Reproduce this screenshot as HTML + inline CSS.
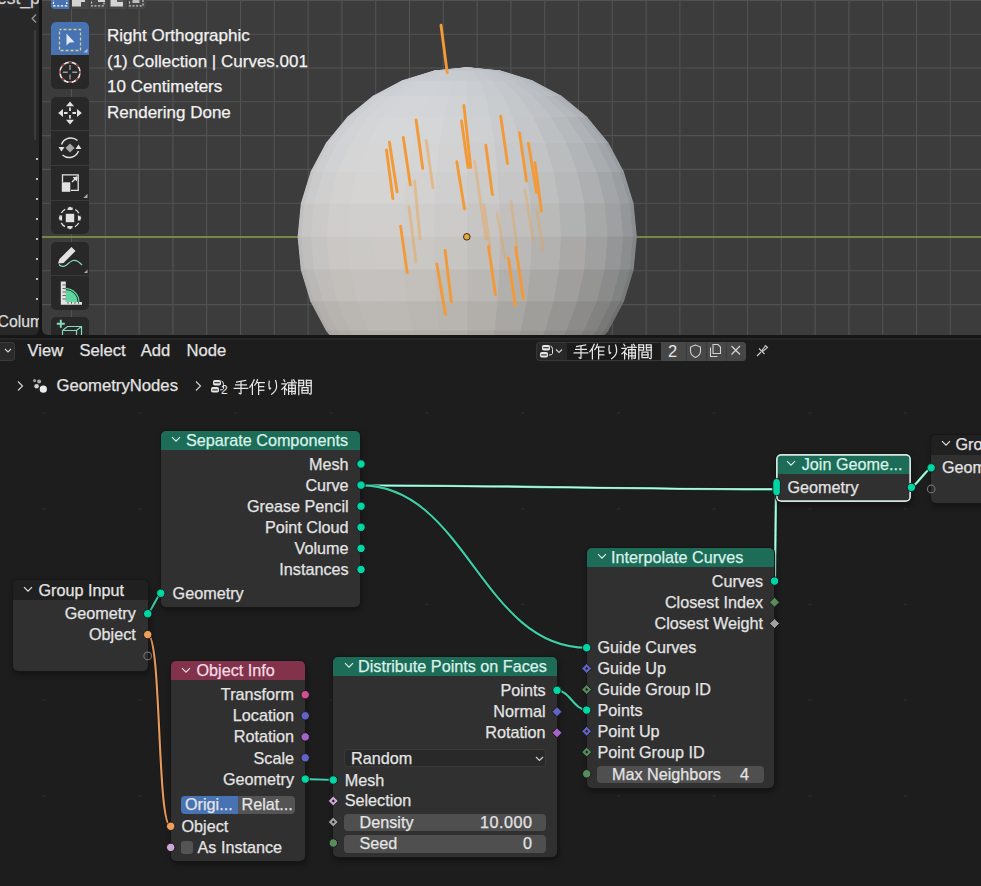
<!DOCTYPE html><html><head><meta charset="utf-8"><style>
html,body{margin:0;padding:0;width:981px;height:886px;overflow:hidden;background:#1d1d1d;position:relative;font-family:"Liberation Sans",sans-serif}
.abs{position:absolute}
.t{position:absolute;white-space:nowrap;line-height:20px;height:20px;-webkit-text-stroke:0.25px currentColor}
.node{position:absolute;background:#303030;border-radius:5px;box-shadow:0 0 0 1px #161616, 1px 3px 6px rgba(0,0,0,.45);overflow:hidden}
.hdr{position:absolute;left:0;top:0;right:0}
.fld{position:absolute;border-radius:4px}
</style></head><body>
<div class="abs" style="left:0;top:0;width:981px;height:338px;background:#161616"></div>
<div class="abs" style="left:0;top:0;width:39px;height:335px;background:#282828;border-radius:0 0 6px 0"></div>
<div class="abs" style="left:34px;top:30px;width:2px;height:110px;background:#3c3c3c;border-radius:1px"></div>
<div class="abs" style="left:36px;top:158px;width:2px;height:2px;background:#bdbdbd"></div>
<div class="abs" style="left:36px;top:178px;width:2px;height:2px;background:#bdbdbd"></div>
<div class="abs" style="left:36px;top:198px;width:2px;height:2px;background:#bdbdbd"></div>
<div class="abs" style="left:36px;top:218px;width:2px;height:2px;background:#bdbdbd"></div>
<div class="abs" style="left:36px;top:238px;width:2px;height:2px;background:#bdbdbd"></div>
<div class="abs" style="left:36px;top:258px;width:2px;height:2px;background:#bdbdbd"></div>
<div class="abs" style="left:36px;top:278px;width:2px;height:2px;background:#bdbdbd"></div>
<div class="abs" style="left:36px;top:298px;width:2px;height:2px;background:#bdbdbd"></div>
<svg class="abs" style="left:30px;top:11px" width="8" height="12"><polyline points="6,3.5 2.2,7.5 6,11.5" fill="none" stroke="#9a9a9a" stroke-width="1.3"/></svg>
<div class="abs" style="left:42px;top:0;width:939px;height:335px;background:#3c3c3c;border-radius:0 0 0 6px;overflow:hidden">
<svg class="abs" style="left:0;top:0" width="939" height="335"><line x1="29.5" y1="0" x2="29.5" y2="335" stroke="#525252" stroke-width="1.1"/><line x1="63.3" y1="0" x2="63.3" y2="335" stroke="#525252" stroke-width="1.1"/><line x1="97.1" y1="0" x2="97.1" y2="335" stroke="#525252" stroke-width="1.1"/><line x1="130.9" y1="0" x2="130.9" y2="335" stroke="#525252" stroke-width="1.1"/><line x1="164.7" y1="0" x2="164.7" y2="335" stroke="#525252" stroke-width="1.1"/><line x1="198.5" y1="0" x2="198.5" y2="335" stroke="#525252" stroke-width="1.1"/><line x1="232.3" y1="0" x2="232.3" y2="335" stroke="#525252" stroke-width="1.1"/><line x1="266.1" y1="0" x2="266.1" y2="335" stroke="#525252" stroke-width="1.1"/><line x1="299.9" y1="0" x2="299.9" y2="335" stroke="#525252" stroke-width="1.1"/><line x1="333.7" y1="0" x2="333.7" y2="335" stroke="#525252" stroke-width="1.1"/><line x1="367.5" y1="0" x2="367.5" y2="335" stroke="#525252" stroke-width="1.1"/><line x1="401.3" y1="0" x2="401.3" y2="335" stroke="#525252" stroke-width="1.1"/><line x1="435.1" y1="0" x2="435.1" y2="335" stroke="#525252" stroke-width="1.1"/><line x1="468.9" y1="0" x2="468.9" y2="335" stroke="#525252" stroke-width="1.1"/><line x1="502.7" y1="0" x2="502.7" y2="335" stroke="#525252" stroke-width="1.1"/><line x1="536.5" y1="0" x2="536.5" y2="335" stroke="#525252" stroke-width="1.1"/><line x1="570.3" y1="0" x2="570.3" y2="335" stroke="#525252" stroke-width="1.1"/><line x1="604.1" y1="0" x2="604.1" y2="335" stroke="#525252" stroke-width="1.1"/><line x1="637.9" y1="0" x2="637.9" y2="335" stroke="#525252" stroke-width="1.1"/><line x1="671.7" y1="0" x2="671.7" y2="335" stroke="#525252" stroke-width="1.1"/><line x1="705.5" y1="0" x2="705.5" y2="335" stroke="#525252" stroke-width="1.1"/><line x1="739.3" y1="0" x2="739.3" y2="335" stroke="#525252" stroke-width="1.1"/><line x1="773.1" y1="0" x2="773.1" y2="335" stroke="#525252" stroke-width="1.1"/><line x1="806.9" y1="0" x2="806.9" y2="335" stroke="#525252" stroke-width="1.1"/><line x1="840.7" y1="0" x2="840.7" y2="335" stroke="#525252" stroke-width="1.1"/><line x1="874.5" y1="0" x2="874.5" y2="335" stroke="#525252" stroke-width="1.1"/><line x1="908.3" y1="0" x2="908.3" y2="335" stroke="#525252" stroke-width="1.1"/><line x1="0" y1="0.4" x2="939" y2="0.4" stroke="#525252" stroke-width="1.1"/><line x1="0" y1="34.2" x2="939" y2="34.2" stroke="#525252" stroke-width="1.1"/><line x1="0" y1="68.0" x2="939" y2="68.0" stroke="#525252" stroke-width="1.1"/><line x1="0" y1="101.8" x2="939" y2="101.8" stroke="#525252" stroke-width="1.1"/><line x1="0" y1="135.6" x2="939" y2="135.6" stroke="#525252" stroke-width="1.1"/><line x1="0" y1="169.4" x2="939" y2="169.4" stroke="#525252" stroke-width="1.1"/><line x1="0" y1="203.2" x2="939" y2="203.2" stroke="#525252" stroke-width="1.1"/><line x1="0" y1="270.8" x2="939" y2="270.8" stroke="#525252" stroke-width="1.1"/><line x1="0" y1="304.6" x2="939" y2="304.6" stroke="#525252" stroke-width="1.1"/><line x1="0" y1="237" x2="939" y2="237" stroke="#86a24a" stroke-width="1.4"/></svg>
</div>
<svg class="abs" style="left:0;top:0" width="981" height="338"><defs><clipPath id="vc"><rect x="42" y="0" width="939" height="335"/></clipPath></defs><g clip-path="url(#vc)"><polygon points="467.2,67.8 467.2,67.8 473.6,71.0 467.2,71.0" fill="rgb(192, 197, 203)" stroke="rgb(192, 197, 203)" stroke-width="1.2" stroke-linejoin="round"/><polygon points="467.2,67.8 467.2,67.8 479.8,71.0 473.6,71.0" fill="rgb(192, 196, 202)" stroke="rgb(192, 196, 202)" stroke-width="1.2" stroke-linejoin="round"/><polygon points="467.2,67.8 467.2,67.8 485.5,71.0 479.8,71.0" fill="rgb(191, 196, 202)" stroke="rgb(191, 196, 202)" stroke-width="1.2" stroke-linejoin="round"/><polygon points="467.2,67.8 467.2,67.8 490.5,71.0 485.5,71.0" fill="rgb(190, 195, 201)" stroke="rgb(190, 195, 201)" stroke-width="1.2" stroke-linejoin="round"/><polygon points="467.2,67.8 467.2,67.8 494.6,71.0 490.5,71.0" fill="rgb(189, 194, 200)" stroke="rgb(189, 194, 200)" stroke-width="1.2" stroke-linejoin="round"/><polygon points="467.2,67.8 467.2,67.8 497.7,71.0 494.6,71.0" fill="rgb(188, 193, 199)" stroke="rgb(188, 193, 199)" stroke-width="1.2" stroke-linejoin="round"/><polygon points="467.2,67.8 467.2,67.8 499.5,71.0 497.7,71.0" fill="rgb(188, 193, 199)" stroke="rgb(188, 193, 199)" stroke-width="1.2" stroke-linejoin="round"/><polygon points="467.2,67.8 467.2,67.8 500.2,71.0 499.5,71.0" fill="rgb(187, 192, 198)" stroke="rgb(187, 192, 198)" stroke-width="1.2" stroke-linejoin="round"/><polygon points="467.2,67.8 467.2,67.8 434.9,71.0 434.2,71.0" fill="rgb(192, 196, 202)" stroke="rgb(192, 196, 202)" stroke-width="1.2" stroke-linejoin="round"/><polygon points="467.2,67.8 467.2,67.8 436.7,71.0 434.9,71.0" fill="rgb(192, 197, 203)" stroke="rgb(192, 197, 203)" stroke-width="1.2" stroke-linejoin="round"/><polygon points="467.2,67.8 467.2,67.8 439.8,71.0 436.7,71.0" fill="rgb(193, 197, 203)" stroke="rgb(193, 197, 203)" stroke-width="1.2" stroke-linejoin="round"/><polygon points="467.2,67.8 467.2,67.8 443.9,71.0 439.8,71.0" fill="rgb(193, 198, 203)" stroke="rgb(193, 198, 203)" stroke-width="1.2" stroke-linejoin="round"/><polygon points="467.2,67.8 467.2,67.8 448.9,71.0 443.9,71.0" fill="rgb(193, 198, 204)" stroke="rgb(193, 198, 204)" stroke-width="1.2" stroke-linejoin="round"/><polygon points="467.2,67.8 467.2,67.8 454.6,71.0 448.9,71.0" fill="rgb(193, 198, 204)" stroke="rgb(193, 198, 204)" stroke-width="1.2" stroke-linejoin="round"/><polygon points="467.2,67.8 467.2,67.8 460.8,71.0 454.6,71.0" fill="rgb(193, 198, 203)" stroke="rgb(193, 198, 203)" stroke-width="1.2" stroke-linejoin="round"/><polygon points="467.2,67.8 467.2,67.8 467.2,71.0 460.8,71.0" fill="rgb(193, 197, 203)" stroke="rgb(193, 197, 203)" stroke-width="1.2" stroke-linejoin="round"/><polygon points="467.2,71.0 473.6,71.0 479.8,80.7 467.2,80.7" fill="rgb(198, 202, 207)" stroke="rgb(198, 202, 207)" stroke-width="1.2" stroke-linejoin="round"/><polygon points="473.6,71.0 479.8,71.0 491.9,80.7 479.8,80.7" fill="rgb(196, 200, 205)" stroke="rgb(196, 200, 205)" stroke-width="1.2" stroke-linejoin="round"/><polygon points="479.8,71.0 485.5,71.0 503.1,80.7 491.9,80.7" fill="rgb(194, 198, 204)" stroke="rgb(194, 198, 204)" stroke-width="1.2" stroke-linejoin="round"/><polygon points="485.5,71.0 490.5,71.0 512.9,80.7 503.1,80.7" fill="rgb(192, 196, 202)" stroke="rgb(192, 196, 202)" stroke-width="1.2" stroke-linejoin="round"/><polygon points="490.5,71.0 494.6,71.0 521.0,80.7 512.9,80.7" fill="rgb(189, 194, 199)" stroke="rgb(189, 194, 199)" stroke-width="1.2" stroke-linejoin="round"/><polygon points="494.6,71.0 497.7,71.0 527.0,80.7 521.0,80.7" fill="rgb(187, 192, 197)" stroke="rgb(187, 192, 197)" stroke-width="1.2" stroke-linejoin="round"/><polygon points="497.7,71.0 499.5,71.0 530.6,80.7 527.0,80.7" fill="rgb(184, 189, 195)" stroke="rgb(184, 189, 195)" stroke-width="1.2" stroke-linejoin="round"/><polygon points="499.5,71.0 500.2,71.0 531.9,80.7 530.6,80.7" fill="rgb(182, 187, 193)" stroke="rgb(182, 187, 193)" stroke-width="1.2" stroke-linejoin="round"/><polygon points="434.2,71.0 434.9,71.0 403.8,80.7 402.5,80.7" fill="rgb(196, 200, 206)" stroke="rgb(196, 200, 206)" stroke-width="1.2" stroke-linejoin="round"/><polygon points="434.9,71.0 436.7,71.0 407.4,80.7 403.8,80.7" fill="rgb(198, 202, 207)" stroke="rgb(198, 202, 207)" stroke-width="1.2" stroke-linejoin="round"/><polygon points="436.7,71.0 439.8,71.0 413.4,80.7 407.4,80.7" fill="rgb(199, 203, 208)" stroke="rgb(199, 203, 208)" stroke-width="1.2" stroke-linejoin="round"/><polygon points="439.8,71.0 443.9,71.0 421.5,80.7 413.4,80.7" fill="rgb(200, 204, 209)" stroke="rgb(200, 204, 209)" stroke-width="1.2" stroke-linejoin="round"/><polygon points="443.9,71.0 448.9,71.0 431.3,80.7 421.5,80.7" fill="rgb(201, 205, 210)" stroke="rgb(201, 205, 210)" stroke-width="1.2" stroke-linejoin="round"/><polygon points="448.9,71.0 454.6,71.0 442.5,80.7 431.3,80.7" fill="rgb(201, 205, 209)" stroke="rgb(201, 205, 209)" stroke-width="1.2" stroke-linejoin="round"/><polygon points="454.6,71.0 460.8,71.0 454.6,80.7 442.5,80.7" fill="rgb(200, 204, 209)" stroke="rgb(200, 204, 209)" stroke-width="1.2" stroke-linejoin="round"/><polygon points="460.8,71.0 467.2,71.0 467.2,80.7 454.6,80.7" fill="rgb(199, 203, 208)" stroke="rgb(199, 203, 208)" stroke-width="1.2" stroke-linejoin="round"/><polygon points="467.2,80.7 479.8,80.7 485.5,96.3 467.2,96.3" fill="rgb(202, 206, 210)" stroke="rgb(202, 206, 210)" stroke-width="1.2" stroke-linejoin="round"/><polygon points="479.8,80.7 491.9,80.7 503.1,96.3 485.5,96.3" fill="rgb(199, 203, 207)" stroke="rgb(199, 203, 207)" stroke-width="1.2" stroke-linejoin="round"/><polygon points="491.9,80.7 503.1,80.7 519.4,96.3 503.1,96.3" fill="rgb(196, 200, 204)" stroke="rgb(196, 200, 204)" stroke-width="1.2" stroke-linejoin="round"/><polygon points="503.1,80.7 512.9,80.7 533.6,96.3 519.4,96.3" fill="rgb(192, 196, 201)" stroke="rgb(192, 196, 201)" stroke-width="1.2" stroke-linejoin="round"/><polygon points="512.9,80.7 521.0,80.7 545.3,96.3 533.6,96.3" fill="rgb(188, 192, 197)" stroke="rgb(188, 192, 197)" stroke-width="1.2" stroke-linejoin="round"/><polygon points="521.0,80.7 527.0,80.7 553.9,96.3 545.3,96.3" fill="rgb(184, 189, 194)" stroke="rgb(184, 189, 194)" stroke-width="1.2" stroke-linejoin="round"/><polygon points="527.0,80.7 530.6,80.7 559.3,96.3 553.9,96.3" fill="rgb(180, 185, 190)" stroke="rgb(180, 185, 190)" stroke-width="1.2" stroke-linejoin="round"/><polygon points="530.6,80.7 531.9,80.7 561.1,96.3 559.3,96.3" fill="rgb(176, 181, 187)" stroke="rgb(176, 181, 187)" stroke-width="1.2" stroke-linejoin="round"/><polygon points="402.5,80.7 403.8,80.7 375.1,96.3 373.3,96.3" fill="rgb(199, 203, 207)" stroke="rgb(199, 203, 207)" stroke-width="1.2" stroke-linejoin="round"/><polygon points="403.8,80.7 407.4,80.7 380.5,96.3 375.1,96.3" fill="rgb(202, 205, 210)" stroke="rgb(202, 205, 210)" stroke-width="1.2" stroke-linejoin="round"/><polygon points="407.4,80.7 413.4,80.7 389.1,96.3 380.5,96.3" fill="rgb(204, 208, 212)" stroke="rgb(204, 208, 212)" stroke-width="1.2" stroke-linejoin="round"/><polygon points="413.4,80.7 421.5,80.7 400.8,96.3 389.1,96.3" fill="rgb(206, 209, 213)" stroke="rgb(206, 209, 213)" stroke-width="1.2" stroke-linejoin="round"/><polygon points="421.5,80.7 431.3,80.7 415.0,96.3 400.8,96.3" fill="rgb(207, 210, 214)" stroke="rgb(207, 210, 214)" stroke-width="1.2" stroke-linejoin="round"/><polygon points="431.3,80.7 442.5,80.7 431.3,96.3 415.0,96.3" fill="rgb(207, 210, 214)" stroke="rgb(207, 210, 214)" stroke-width="1.2" stroke-linejoin="round"/><polygon points="442.5,80.7 454.6,80.7 448.9,96.3 431.3,96.3" fill="rgb(206, 209, 213)" stroke="rgb(206, 209, 213)" stroke-width="1.2" stroke-linejoin="round"/><polygon points="454.6,80.7 467.2,80.7 467.2,96.3 448.9,96.3" fill="rgb(205, 208, 212)" stroke="rgb(205, 208, 212)" stroke-width="1.2" stroke-linejoin="round"/><polygon points="467.2,96.3 485.5,96.3 490.5,117.3 467.2,117.3" fill="rgb(205, 208, 210)" stroke="rgb(205, 208, 210)" stroke-width="1.2" stroke-linejoin="round"/><polygon points="485.5,96.3 503.1,96.3 512.9,117.3 490.5,117.3" fill="rgb(201, 204, 207)" stroke="rgb(201, 204, 207)" stroke-width="1.2" stroke-linejoin="round"/><polygon points="503.1,96.3 519.4,96.3 533.6,117.3 512.9,117.3" fill="rgb(197, 200, 203)" stroke="rgb(197, 200, 203)" stroke-width="1.2" stroke-linejoin="round"/><polygon points="519.4,96.3 533.6,96.3 551.7,117.3 533.6,117.3" fill="rgb(191, 195, 199)" stroke="rgb(191, 195, 199)" stroke-width="1.2" stroke-linejoin="round"/><polygon points="533.6,96.3 545.3,96.3 566.6,117.3 551.7,117.3" fill="rgb(186, 190, 194)" stroke="rgb(186, 190, 194)" stroke-width="1.2" stroke-linejoin="round"/><polygon points="545.3,96.3 553.9,96.3 577.6,117.3 566.6,117.3" fill="rgb(180, 185, 189)" stroke="rgb(180, 185, 189)" stroke-width="1.2" stroke-linejoin="round"/><polygon points="553.9,96.3 559.3,96.3 584.4,117.3 577.6,117.3" fill="rgb(175, 179, 185)" stroke="rgb(175, 179, 185)" stroke-width="1.2" stroke-linejoin="round"/><polygon points="559.3,96.3 561.1,96.3 586.7,117.3 584.4,117.3" fill="rgb(169, 174, 180)" stroke="rgb(169, 174, 180)" stroke-width="1.2" stroke-linejoin="round"/><polygon points="373.3,96.3 375.1,96.3 350.0,117.3 347.7,117.3" fill="rgb(201, 204, 207)" stroke="rgb(201, 204, 207)" stroke-width="1.2" stroke-linejoin="round"/><polygon points="375.1,96.3 380.5,96.3 356.8,117.3 350.0,117.3" fill="rgb(205, 207, 211)" stroke="rgb(205, 207, 211)" stroke-width="1.2" stroke-linejoin="round"/><polygon points="380.5,96.3 389.1,96.3 367.8,117.3 356.8,117.3" fill="rgb(208, 210, 213)" stroke="rgb(208, 210, 213)" stroke-width="1.2" stroke-linejoin="round"/><polygon points="389.1,96.3 400.8,96.3 382.7,117.3 367.8,117.3" fill="rgb(210, 212, 215)" stroke="rgb(210, 212, 215)" stroke-width="1.2" stroke-linejoin="round"/><polygon points="400.8,96.3 415.0,96.3 400.8,117.3 382.7,117.3" fill="rgb(211, 213, 216)" stroke="rgb(211, 213, 216)" stroke-width="1.2" stroke-linejoin="round"/><polygon points="415.0,96.3 431.3,96.3 421.5,117.3 400.8,117.3" fill="rgb(211, 213, 216)" stroke="rgb(211, 213, 216)" stroke-width="1.2" stroke-linejoin="round"/><polygon points="431.3,96.3 448.9,96.3 443.9,117.3 421.5,117.3" fill="rgb(210, 212, 215)" stroke="rgb(210, 212, 215)" stroke-width="1.2" stroke-linejoin="round"/><polygon points="448.9,96.3 467.2,96.3 467.2,117.3 443.9,117.3" fill="rgb(208, 210, 213)" stroke="rgb(208, 210, 213)" stroke-width="1.2" stroke-linejoin="round"/><polygon points="467.2,117.3 490.5,117.3 494.6,142.9 467.2,142.9" fill="rgb(206, 208, 210)" stroke="rgb(206, 208, 210)" stroke-width="1.2" stroke-linejoin="round"/><polygon points="490.5,117.3 512.9,117.3 521.0,142.9 494.6,142.9" fill="rgb(201, 203, 205)" stroke="rgb(201, 203, 205)" stroke-width="1.2" stroke-linejoin="round"/><polygon points="512.9,117.3 533.6,117.3 545.3,142.9 521.0,142.9" fill="rgb(196, 198, 201)" stroke="rgb(196, 198, 201)" stroke-width="1.2" stroke-linejoin="round"/><polygon points="533.6,117.3 551.7,117.3 566.6,142.9 545.3,142.9" fill="rgb(189, 192, 195)" stroke="rgb(189, 192, 195)" stroke-width="1.2" stroke-linejoin="round"/><polygon points="551.7,117.3 566.6,117.3 584.0,142.9 566.6,142.9" fill="rgb(183, 186, 189)" stroke="rgb(183, 186, 189)" stroke-width="1.2" stroke-linejoin="round"/><polygon points="566.6,117.3 577.6,117.3 597.0,142.9 584.0,142.9" fill="rgb(175, 179, 183)" stroke="rgb(175, 179, 183)" stroke-width="1.2" stroke-linejoin="round"/><polygon points="577.6,117.3 584.4,117.3 605.0,142.9 597.0,142.9" fill="rgb(168, 172, 177)" stroke="rgb(168, 172, 177)" stroke-width="1.2" stroke-linejoin="round"/><polygon points="584.4,117.3 586.7,117.3 607.7,142.9 605.0,142.9" fill="rgb(161, 166, 171)" stroke="rgb(161, 166, 171)" stroke-width="1.2" stroke-linejoin="round"/><polygon points="347.7,117.3 350.0,117.3 329.4,142.9 326.7,142.9" fill="rgb(201, 203, 206)" stroke="rgb(201, 203, 206)" stroke-width="1.2" stroke-linejoin="round"/><polygon points="350.0,117.3 356.8,117.3 337.4,142.9 329.4,142.9" fill="rgb(206, 207, 210)" stroke="rgb(206, 207, 210)" stroke-width="1.2" stroke-linejoin="round"/><polygon points="356.8,117.3 367.8,117.3 350.4,142.9 337.4,142.9" fill="rgb(210, 211, 213)" stroke="rgb(210, 211, 213)" stroke-width="1.2" stroke-linejoin="round"/><polygon points="367.8,117.3 382.7,117.3 367.8,142.9 350.4,142.9" fill="rgb(212, 213, 215)" stroke="rgb(212, 213, 215)" stroke-width="1.2" stroke-linejoin="round"/><polygon points="382.7,117.3 400.8,117.3 389.1,142.9 367.8,142.9" fill="rgb(214, 215, 216)" stroke="rgb(214, 215, 216)" stroke-width="1.2" stroke-linejoin="round"/><polygon points="400.8,117.3 421.5,117.3 413.4,142.9 389.1,142.9" fill="rgb(214, 215, 216)" stroke="rgb(214, 215, 216)" stroke-width="1.2" stroke-linejoin="round"/><polygon points="421.5,117.3 443.9,117.3 439.8,142.9 413.4,142.9" fill="rgb(213, 214, 215)" stroke="rgb(213, 214, 215)" stroke-width="1.2" stroke-linejoin="round"/><polygon points="443.9,117.3 467.2,117.3 467.2,142.9 439.8,142.9" fill="rgb(210, 211, 213)" stroke="rgb(210, 211, 213)" stroke-width="1.2" stroke-linejoin="round"/><polygon points="467.2,142.9 494.6,142.9 497.7,172.1 467.2,172.1" fill="rgb(206, 206, 207)" stroke="rgb(206, 206, 207)" stroke-width="1.2" stroke-linejoin="round"/><polygon points="494.6,142.9 521.0,142.9 527.0,172.1 497.7,172.1" fill="rgb(200, 201, 202)" stroke="rgb(200, 201, 202)" stroke-width="1.2" stroke-linejoin="round"/><polygon points="521.0,142.9 545.3,142.9 553.9,172.1 527.0,172.1" fill="rgb(194, 195, 197)" stroke="rgb(194, 195, 197)" stroke-width="1.2" stroke-linejoin="round"/><polygon points="545.3,142.9 566.6,142.9 577.6,172.1 553.9,172.1" fill="rgb(186, 189, 190)" stroke="rgb(186, 189, 190)" stroke-width="1.2" stroke-linejoin="round"/><polygon points="566.6,142.9 584.0,142.9 597.0,172.1 577.6,172.1" fill="rgb(178, 181, 183)" stroke="rgb(178, 181, 183)" stroke-width="1.2" stroke-linejoin="round"/><polygon points="584.0,142.9 597.0,142.9 611.5,172.1 597.0,172.1" fill="rgb(169, 173, 176)" stroke="rgb(169, 173, 176)" stroke-width="1.2" stroke-linejoin="round"/><polygon points="597.0,142.9 605.0,142.9 620.3,172.1 611.5,172.1" fill="rgb(161, 165, 169)" stroke="rgb(161, 165, 169)" stroke-width="1.2" stroke-linejoin="round"/><polygon points="605.0,142.9 607.7,142.9 623.3,172.1 620.3,172.1" fill="rgb(153, 158, 162)" stroke="rgb(153, 158, 162)" stroke-width="1.2" stroke-linejoin="round"/><polygon points="326.7,142.9 329.4,142.9 314.1,172.1 311.1,172.1" fill="rgb(199, 201, 203)" stroke="rgb(199, 201, 203)" stroke-width="1.2" stroke-linejoin="round"/><polygon points="329.4,142.9 337.4,142.9 322.9,172.1 314.1,172.1" fill="rgb(205, 206, 207)" stroke="rgb(205, 206, 207)" stroke-width="1.2" stroke-linejoin="round"/><polygon points="337.4,142.9 350.4,142.9 337.4,172.1 322.9,172.1" fill="rgb(209, 210, 211)" stroke="rgb(209, 210, 211)" stroke-width="1.2" stroke-linejoin="round"/><polygon points="350.4,142.9 367.8,142.9 356.8,172.1 337.4,172.1" fill="rgb(213, 213, 213)" stroke="rgb(213, 213, 213)" stroke-width="1.2" stroke-linejoin="round"/><polygon points="367.8,142.9 389.1,142.9 380.5,172.1 356.8,172.1" fill="rgb(214, 214, 215)" stroke="rgb(214, 214, 215)" stroke-width="1.2" stroke-linejoin="round"/><polygon points="389.1,142.9 413.4,142.9 407.4,172.1 380.5,172.1" fill="rgb(214, 214, 215)" stroke="rgb(214, 214, 215)" stroke-width="1.2" stroke-linejoin="round"/><polygon points="413.4,142.9 439.8,142.9 436.7,172.1 407.4,172.1" fill="rgb(213, 213, 213)" stroke="rgb(213, 213, 213)" stroke-width="1.2" stroke-linejoin="round"/><polygon points="439.8,142.9 467.2,142.9 467.2,172.1 436.7,172.1" fill="rgb(210, 210, 211)" stroke="rgb(210, 210, 211)" stroke-width="1.2" stroke-linejoin="round"/><polygon points="467.2,172.1 497.7,172.1 499.5,203.8 467.2,203.8" fill="rgb(203, 203, 202)" stroke="rgb(203, 203, 202)" stroke-width="1.2" stroke-linejoin="round"/><polygon points="497.7,172.1 527.0,172.1 530.6,203.8 499.5,203.8" fill="rgb(197, 198, 197)" stroke="rgb(197, 198, 197)" stroke-width="1.2" stroke-linejoin="round"/><polygon points="527.0,172.1 553.9,172.1 559.3,203.8 530.6,203.8" fill="rgb(190, 191, 191)" stroke="rgb(190, 191, 191)" stroke-width="1.2" stroke-linejoin="round"/><polygon points="553.9,172.1 577.6,172.1 584.4,203.8 559.3,203.8" fill="rgb(182, 184, 185)" stroke="rgb(182, 184, 185)" stroke-width="1.2" stroke-linejoin="round"/><polygon points="577.6,172.1 597.0,172.1 605.0,203.8 584.4,203.8" fill="rgb(173, 175, 176)" stroke="rgb(173, 175, 176)" stroke-width="1.2" stroke-linejoin="round"/><polygon points="597.0,172.1 611.5,172.1 620.3,203.8 605.0,203.8" fill="rgb(163, 166, 168)" stroke="rgb(163, 166, 168)" stroke-width="1.2" stroke-linejoin="round"/><polygon points="611.5,172.1 620.3,172.1 629.8,203.8 620.3,203.8" fill="rgb(154, 158, 161)" stroke="rgb(154, 158, 161)" stroke-width="1.2" stroke-linejoin="round"/><polygon points="620.3,172.1 623.3,172.1 633.0,203.8 629.8,203.8" fill="rgb(146, 150, 154)" stroke="rgb(146, 150, 154)" stroke-width="1.2" stroke-linejoin="round"/><polygon points="311.1,172.1 314.1,172.1 304.6,203.8 301.4,203.8" fill="rgb(196, 197, 198)" stroke="rgb(196, 197, 198)" stroke-width="1.2" stroke-linejoin="round"/><polygon points="314.1,172.1 322.9,172.1 314.1,203.8 304.6,203.8" fill="rgb(203, 203, 203)" stroke="rgb(203, 203, 203)" stroke-width="1.2" stroke-linejoin="round"/><polygon points="322.9,172.1 337.4,172.1 329.4,203.8 314.1,203.8" fill="rgb(207, 207, 207)" stroke="rgb(207, 207, 207)" stroke-width="1.2" stroke-linejoin="round"/><polygon points="337.4,172.1 356.8,172.1 350.0,203.8 329.4,203.8" fill="rgb(211, 210, 209)" stroke="rgb(211, 210, 209)" stroke-width="1.2" stroke-linejoin="round"/><polygon points="356.8,172.1 380.5,172.1 375.1,203.8 350.0,203.8" fill="rgb(213, 212, 211)" stroke="rgb(213, 212, 211)" stroke-width="1.2" stroke-linejoin="round"/><polygon points="380.5,172.1 407.4,172.1 403.8,203.8 375.1,203.8" fill="rgb(213, 212, 211)" stroke="rgb(213, 212, 211)" stroke-width="1.2" stroke-linejoin="round"/><polygon points="407.4,172.1 436.7,172.1 434.9,203.8 403.8,203.8" fill="rgb(211, 210, 209)" stroke="rgb(211, 210, 209)" stroke-width="1.2" stroke-linejoin="round"/><polygon points="436.7,172.1 467.2,172.1 467.2,203.8 434.9,203.8" fill="rgb(208, 207, 207)" stroke="rgb(208, 207, 207)" stroke-width="1.2" stroke-linejoin="round"/><polygon points="467.2,203.8 499.5,203.8 500.2,236.8 467.2,236.8" fill="rgb(199, 198, 197)" stroke="rgb(199, 198, 197)" stroke-width="1.2" stroke-linejoin="round"/><polygon points="499.5,203.8 530.6,203.8 531.9,236.8 500.2,236.8" fill="rgb(193, 192, 191)" stroke="rgb(193, 192, 191)" stroke-width="1.2" stroke-linejoin="round"/><polygon points="530.6,203.8 559.3,203.8 561.1,236.8 531.9,236.8" fill="rgb(186, 186, 185)" stroke="rgb(186, 186, 185)" stroke-width="1.2" stroke-linejoin="round"/><polygon points="559.3,203.8 584.4,203.8 586.7,236.8 561.1,236.8" fill="rgb(177, 178, 178)" stroke="rgb(177, 178, 178)" stroke-width="1.2" stroke-linejoin="round"/><polygon points="584.4,203.8 605.0,203.8 607.7,236.8 586.7,236.8" fill="rgb(167, 169, 169)" stroke="rgb(167, 169, 169)" stroke-width="1.2" stroke-linejoin="round"/><polygon points="605.0,203.8 620.3,203.8 623.3,236.8 607.7,236.8" fill="rgb(158, 160, 161)" stroke="rgb(158, 160, 161)" stroke-width="1.2" stroke-linejoin="round"/><polygon points="620.3,203.8 629.8,203.8 633.0,236.8 623.3,236.8" fill="rgb(148, 151, 153)" stroke="rgb(148, 151, 153)" stroke-width="1.2" stroke-linejoin="round"/><polygon points="629.8,203.8 633.0,203.8 636.2,236.8 633.0,236.8" fill="rgb(140, 143, 146)" stroke="rgb(140, 143, 146)" stroke-width="1.2" stroke-linejoin="round"/><polygon points="301.4,203.8 304.6,203.8 301.4,236.8 298.2,236.8" fill="rgb(192, 192, 192)" stroke="rgb(192, 192, 192)" stroke-width="1.2" stroke-linejoin="round"/><polygon points="304.6,203.8 314.1,203.8 311.1,236.8 301.4,236.8" fill="rgb(199, 198, 197)" stroke="rgb(199, 198, 197)" stroke-width="1.2" stroke-linejoin="round"/><polygon points="314.1,203.8 329.4,203.8 326.7,236.8 311.1,236.8" fill="rgb(204, 202, 201)" stroke="rgb(204, 202, 201)" stroke-width="1.2" stroke-linejoin="round"/><polygon points="329.4,203.8 350.0,203.8 347.7,236.8 326.7,236.8" fill="rgb(207, 206, 204)" stroke="rgb(207, 206, 204)" stroke-width="1.2" stroke-linejoin="round"/><polygon points="350.0,203.8 375.1,203.8 373.3,236.8 347.7,236.8" fill="rgb(209, 207, 205)" stroke="rgb(209, 207, 205)" stroke-width="1.2" stroke-linejoin="round"/><polygon points="375.1,203.8 403.8,203.8 402.5,236.8 373.3,236.8" fill="rgb(209, 207, 205)" stroke="rgb(209, 207, 205)" stroke-width="1.2" stroke-linejoin="round"/><polygon points="403.8,203.8 434.9,203.8 434.2,236.8 402.5,236.8" fill="rgb(207, 206, 204)" stroke="rgb(207, 206, 204)" stroke-width="1.2" stroke-linejoin="round"/><polygon points="434.9,203.8 467.2,203.8 467.2,236.8 434.2,236.8" fill="rgb(204, 203, 201)" stroke="rgb(204, 203, 201)" stroke-width="1.2" stroke-linejoin="round"/><polygon points="467.2,236.8 500.2,236.8 499.5,269.8 467.2,269.8" fill="rgb(193, 192, 189)" stroke="rgb(193, 192, 189)" stroke-width="1.2" stroke-linejoin="round"/><polygon points="500.2,236.8 531.9,236.8 530.6,269.8 499.5,269.8" fill="rgb(187, 185, 183)" stroke="rgb(187, 185, 183)" stroke-width="1.2" stroke-linejoin="round"/><polygon points="531.9,236.8 561.1,236.8 559.3,269.8 530.6,269.8" fill="rgb(179, 178, 176)" stroke="rgb(179, 178, 176)" stroke-width="1.2" stroke-linejoin="round"/><polygon points="561.1,236.8 586.7,236.8 584.4,269.8 559.3,269.8" fill="rgb(170, 169, 168)" stroke="rgb(170, 169, 168)" stroke-width="1.2" stroke-linejoin="round"/><polygon points="586.7,236.8 607.7,236.8 605.0,269.8 584.4,269.8" fill="rgb(159, 160, 159)" stroke="rgb(159, 160, 159)" stroke-width="1.2" stroke-linejoin="round"/><polygon points="607.7,236.8 623.3,236.8 620.3,269.8 605.0,269.8" fill="rgb(149, 150, 151)" stroke="rgb(149, 150, 151)" stroke-width="1.2" stroke-linejoin="round"/><polygon points="623.3,236.8 633.0,236.8 629.8,269.8 620.3,269.8" fill="rgb(139, 141, 142)" stroke="rgb(139, 141, 142)" stroke-width="1.2" stroke-linejoin="round"/><polygon points="633.0,236.8 636.2,236.8 633.0,269.8 629.8,269.8" fill="rgb(131, 133, 135)" stroke="rgb(131, 133, 135)" stroke-width="1.2" stroke-linejoin="round"/><polygon points="298.2,236.8 301.4,236.8 304.6,269.8 301.4,269.8" fill="rgb(187, 186, 185)" stroke="rgb(187, 186, 185)" stroke-width="1.2" stroke-linejoin="round"/><polygon points="301.4,236.8 311.1,236.8 314.1,269.8 304.6,269.8" fill="rgb(193, 191, 190)" stroke="rgb(193, 191, 190)" stroke-width="1.2" stroke-linejoin="round"/><polygon points="311.1,236.8 326.7,236.8 329.4,269.8 314.1,269.8" fill="rgb(198, 196, 194)" stroke="rgb(198, 196, 194)" stroke-width="1.2" stroke-linejoin="round"/><polygon points="326.7,236.8 347.7,236.8 350.0,269.8 329.4,269.8" fill="rgb(202, 199, 197)" stroke="rgb(202, 199, 197)" stroke-width="1.2" stroke-linejoin="round"/><polygon points="347.7,236.8 373.3,236.8 375.1,269.8 350.0,269.8" fill="rgb(203, 201, 198)" stroke="rgb(203, 201, 198)" stroke-width="1.2" stroke-linejoin="round"/><polygon points="373.3,236.8 402.5,236.8 403.8,269.8 375.1,269.8" fill="rgb(204, 201, 198)" stroke="rgb(204, 201, 198)" stroke-width="1.2" stroke-linejoin="round"/><polygon points="402.5,236.8 434.2,236.8 434.9,269.8 403.8,269.8" fill="rgb(202, 200, 197)" stroke="rgb(202, 200, 197)" stroke-width="1.2" stroke-linejoin="round"/><polygon points="434.2,236.8 467.2,236.8 467.2,269.8 434.9,269.8" fill="rgb(199, 197, 194)" stroke="rgb(199, 197, 194)" stroke-width="1.2" stroke-linejoin="round"/><polygon points="467.2,269.8 499.5,269.8 497.7,301.5 467.2,301.5" fill="rgb(186, 184, 180)" stroke="rgb(186, 184, 180)" stroke-width="1.2" stroke-linejoin="round"/><polygon points="499.5,269.8 530.6,269.8 527.0,301.5 497.7,301.5" fill="rgb(178, 176, 173)" stroke="rgb(178, 176, 173)" stroke-width="1.2" stroke-linejoin="round"/><polygon points="530.6,269.8 559.3,269.8 553.9,301.5 527.0,301.5" fill="rgb(169, 168, 165)" stroke="rgb(169, 168, 165)" stroke-width="1.2" stroke-linejoin="round"/><polygon points="559.3,269.8 584.4,269.8 577.6,301.5 553.9,301.5" fill="rgb(160, 159, 157)" stroke="rgb(160, 159, 157)" stroke-width="1.2" stroke-linejoin="round"/><polygon points="584.4,269.8 605.0,269.8 597.0,301.5 577.6,301.5" fill="rgb(149, 149, 147)" stroke="rgb(149, 149, 147)" stroke-width="1.2" stroke-linejoin="round"/><polygon points="605.0,269.8 620.3,269.8 611.5,301.5 597.0,301.5" fill="rgb(138, 139, 138)" stroke="rgb(138, 139, 138)" stroke-width="1.2" stroke-linejoin="round"/><polygon points="620.3,269.8 629.8,269.8 620.3,301.5 611.5,301.5" fill="rgb(129, 130, 130)" stroke="rgb(129, 130, 130)" stroke-width="1.2" stroke-linejoin="round"/><polygon points="629.8,269.8 633.0,269.8 623.3,301.5 620.3,301.5" fill="rgb(120, 122, 123)" stroke="rgb(120, 122, 123)" stroke-width="1.2" stroke-linejoin="round"/><polygon points="301.4,269.8 304.6,269.8 314.1,301.5 311.1,301.5" fill="rgb(180, 179, 177)" stroke="rgb(180, 179, 177)" stroke-width="1.2" stroke-linejoin="round"/><polygon points="304.6,269.8 314.1,269.8 322.9,301.5 314.1,301.5" fill="rgb(186, 184, 182)" stroke="rgb(186, 184, 182)" stroke-width="1.2" stroke-linejoin="round"/><polygon points="314.1,269.8 329.4,269.8 337.4,301.5 322.9,301.5" fill="rgb(191, 189, 186)" stroke="rgb(191, 189, 186)" stroke-width="1.2" stroke-linejoin="round"/><polygon points="329.4,269.8 350.0,269.8 356.8,301.5 337.4,301.5" fill="rgb(195, 192, 188)" stroke="rgb(195, 192, 188)" stroke-width="1.2" stroke-linejoin="round"/><polygon points="350.0,269.8 375.1,269.8 380.5,301.5 356.8,301.5" fill="rgb(196, 193, 190)" stroke="rgb(196, 193, 190)" stroke-width="1.2" stroke-linejoin="round"/><polygon points="375.1,269.8 403.8,269.8 407.4,301.5 380.5,301.5" fill="rgb(196, 193, 190)" stroke="rgb(196, 193, 190)" stroke-width="1.2" stroke-linejoin="round"/><polygon points="403.8,269.8 434.9,269.8 436.7,301.5 407.4,301.5" fill="rgb(195, 192, 188)" stroke="rgb(195, 192, 188)" stroke-width="1.2" stroke-linejoin="round"/><polygon points="434.9,269.8 467.2,269.8 467.2,301.5 436.7,301.5" fill="rgb(192, 189, 185)" stroke="rgb(192, 189, 185)" stroke-width="1.2" stroke-linejoin="round"/><polygon points="467.2,301.5 497.7,301.5 494.6,330.7 467.2,330.7" fill="rgb(178, 175, 171)" stroke="rgb(178, 175, 171)" stroke-width="1.2" stroke-linejoin="round"/><polygon points="497.7,301.5 527.0,301.5 521.0,330.7 494.6,330.7" fill="rgb(169, 167, 163)" stroke="rgb(169, 167, 163)" stroke-width="1.2" stroke-linejoin="round"/><polygon points="527.0,301.5 553.9,301.5 545.3,330.7 521.0,330.7" fill="rgb(160, 158, 155)" stroke="rgb(160, 158, 155)" stroke-width="1.2" stroke-linejoin="round"/><polygon points="553.9,301.5 577.6,301.5 566.6,330.7 545.3,330.7" fill="rgb(150, 149, 146)" stroke="rgb(150, 149, 146)" stroke-width="1.2" stroke-linejoin="round"/><polygon points="577.6,301.5 597.0,301.5 584.0,330.7 566.6,330.7" fill="rgb(140, 139, 137)" stroke="rgb(140, 139, 137)" stroke-width="1.2" stroke-linejoin="round"/><polygon points="597.0,301.5 611.5,301.5 597.0,330.7 584.0,330.7" fill="rgb(130, 130, 128)" stroke="rgb(130, 130, 128)" stroke-width="1.2" stroke-linejoin="round"/><polygon points="611.5,301.5 620.3,301.5 605.0,330.7 597.0,330.7" fill="rgb(120, 121, 120)" stroke="rgb(120, 121, 120)" stroke-width="1.2" stroke-linejoin="round"/><polygon points="620.3,301.5 623.3,301.5 607.7,330.7 605.0,330.7" fill="rgb(112, 113, 113)" stroke="rgb(112, 113, 113)" stroke-width="1.2" stroke-linejoin="round"/><polygon points="311.1,301.5 314.1,301.5 329.4,330.7 326.7,330.7" fill="rgb(173, 171, 168)" stroke="rgb(173, 171, 168)" stroke-width="1.2" stroke-linejoin="round"/><polygon points="314.1,301.5 322.9,301.5 337.4,330.7 329.4,330.7" fill="rgb(179, 176, 173)" stroke="rgb(179, 176, 173)" stroke-width="1.2" stroke-linejoin="round"/><polygon points="322.9,301.5 337.4,301.5 350.4,330.7 337.4,330.7" fill="rgb(183, 180, 176)" stroke="rgb(183, 180, 176)" stroke-width="1.2" stroke-linejoin="round"/><polygon points="337.4,301.5 356.8,301.5 367.8,330.7 350.4,330.7" fill="rgb(186, 183, 179)" stroke="rgb(186, 183, 179)" stroke-width="1.2" stroke-linejoin="round"/><polygon points="356.8,301.5 380.5,301.5 389.1,330.7 367.8,330.7" fill="rgb(188, 184, 180)" stroke="rgb(188, 184, 180)" stroke-width="1.2" stroke-linejoin="round"/><polygon points="380.5,301.5 407.4,301.5 413.4,330.7 389.1,330.7" fill="rgb(188, 184, 180)" stroke="rgb(188, 184, 180)" stroke-width="1.2" stroke-linejoin="round"/><polygon points="407.4,301.5 436.7,301.5 439.8,330.7 413.4,330.7" fill="rgb(186, 183, 179)" stroke="rgb(186, 183, 179)" stroke-width="1.2" stroke-linejoin="round"/><polygon points="436.7,301.5 467.2,301.5 467.2,330.7 439.8,330.7" fill="rgb(184, 180, 176)" stroke="rgb(184, 180, 176)" stroke-width="1.2" stroke-linejoin="round"/><polygon points="467.2,330.7 494.6,330.7 490.5,356.3 467.2,356.3" fill="rgb(169, 166, 161)" stroke="rgb(169, 166, 161)" stroke-width="1.2" stroke-linejoin="round"/><polygon points="494.6,330.7 521.0,330.7 512.9,356.3 490.5,356.3" fill="rgb(161, 158, 154)" stroke="rgb(161, 158, 154)" stroke-width="1.2" stroke-linejoin="round"/><polygon points="521.0,330.7 545.3,330.7 533.6,356.3 512.9,356.3" fill="rgb(152, 150, 146)" stroke="rgb(152, 150, 146)" stroke-width="1.2" stroke-linejoin="round"/><polygon points="545.3,330.7 566.6,330.7 551.7,356.3 533.6,356.3" fill="rgb(143, 141, 138)" stroke="rgb(143, 141, 138)" stroke-width="1.2" stroke-linejoin="round"/><polygon points="566.6,330.7 584.0,330.7 566.6,356.3 551.7,356.3" fill="rgb(133, 132, 129)" stroke="rgb(133, 132, 129)" stroke-width="1.2" stroke-linejoin="round"/><polygon points="584.0,330.7 597.0,330.7 577.6,356.3 566.6,356.3" fill="rgb(124, 123, 121)" stroke="rgb(124, 123, 121)" stroke-width="1.2" stroke-linejoin="round"/><polygon points="597.0,330.7 605.0,330.7 584.4,356.3 577.6,356.3" fill="rgb(115, 115, 114)" stroke="rgb(115, 115, 114)" stroke-width="1.2" stroke-linejoin="round"/><polygon points="605.0,330.7 607.7,330.7 586.7,356.3 584.4,356.3" fill="rgb(108, 109, 107)" stroke="rgb(108, 109, 107)" stroke-width="1.2" stroke-linejoin="round"/><polygon points="326.7,330.7 329.4,330.7 350.0,356.3 347.7,356.3" fill="rgb(165, 163, 159)" stroke="rgb(165, 163, 159)" stroke-width="1.2" stroke-linejoin="round"/><polygon points="329.4,330.7 337.4,330.7 356.8,356.3 350.0,356.3" fill="rgb(170, 167, 164)" stroke="rgb(170, 167, 164)" stroke-width="1.2" stroke-linejoin="round"/><polygon points="337.4,330.7 350.4,330.7 367.8,356.3 356.8,356.3" fill="rgb(174, 171, 167)" stroke="rgb(174, 171, 167)" stroke-width="1.2" stroke-linejoin="round"/><polygon points="350.4,330.7 367.8,330.7 382.7,356.3 367.8,356.3" fill="rgb(177, 173, 169)" stroke="rgb(177, 173, 169)" stroke-width="1.2" stroke-linejoin="round"/><polygon points="367.8,330.7 389.1,330.7 400.8,356.3 382.7,356.3" fill="rgb(178, 175, 170)" stroke="rgb(178, 175, 170)" stroke-width="1.2" stroke-linejoin="round"/><polygon points="389.1,330.7 413.4,330.7 421.5,356.3 400.8,356.3" fill="rgb(178, 175, 170)" stroke="rgb(178, 175, 170)" stroke-width="1.2" stroke-linejoin="round"/><polygon points="413.4,330.7 439.8,330.7 443.9,356.3 421.5,356.3" fill="rgb(177, 174, 169)" stroke="rgb(177, 174, 169)" stroke-width="1.2" stroke-linejoin="round"/><polygon points="439.8,330.7 467.2,330.7 467.2,356.3 443.9,356.3" fill="rgb(175, 171, 166)" stroke="rgb(175, 171, 166)" stroke-width="1.2" stroke-linejoin="round"/><polygon points="467.2,356.3 490.5,356.3 485.5,377.3 467.2,377.3" fill="rgb(160, 157, 152)" stroke="rgb(160, 157, 152)" stroke-width="1.2" stroke-linejoin="round"/><polygon points="490.5,356.3 512.9,356.3 503.1,377.3 485.5,377.3" fill="rgb(153, 150, 146)" stroke="rgb(153, 150, 146)" stroke-width="1.2" stroke-linejoin="round"/><polygon points="512.9,356.3 533.6,356.3 519.4,377.3 503.1,377.3" fill="rgb(145, 143, 138)" stroke="rgb(145, 143, 138)" stroke-width="1.2" stroke-linejoin="round"/><polygon points="533.6,356.3 551.7,356.3 533.6,377.3 519.4,377.3" fill="rgb(137, 135, 131)" stroke="rgb(137, 135, 131)" stroke-width="1.2" stroke-linejoin="round"/><polygon points="551.7,356.3 566.6,356.3 545.3,377.3 533.6,377.3" fill="rgb(129, 127, 124)" stroke="rgb(129, 127, 124)" stroke-width="1.2" stroke-linejoin="round"/><polygon points="566.6,356.3 577.6,356.3 553.9,377.3 545.3,377.3" fill="rgb(121, 120, 117)" stroke="rgb(121, 120, 117)" stroke-width="1.2" stroke-linejoin="round"/><polygon points="577.6,356.3 584.4,356.3 559.3,377.3 553.9,377.3" fill="rgb(114, 114, 111)" stroke="rgb(114, 114, 111)" stroke-width="1.2" stroke-linejoin="round"/><polygon points="584.4,356.3 586.7,356.3 561.1,377.3 559.3,377.3" fill="rgb(108, 108, 106)" stroke="rgb(108, 108, 106)" stroke-width="1.2" stroke-linejoin="round"/><polygon points="347.7,356.3 350.0,356.3 375.1,377.3 373.3,377.3" fill="rgb(157, 155, 151)" stroke="rgb(157, 155, 151)" stroke-width="1.2" stroke-linejoin="round"/><polygon points="350.0,356.3 356.8,356.3 380.5,377.3 375.1,377.3" fill="rgb(161, 158, 154)" stroke="rgb(161, 158, 154)" stroke-width="1.2" stroke-linejoin="round"/><polygon points="356.8,356.3 367.8,356.3 389.1,377.3 380.5,377.3" fill="rgb(165, 161, 157)" stroke="rgb(165, 161, 157)" stroke-width="1.2" stroke-linejoin="round"/><polygon points="367.8,356.3 382.7,356.3 400.8,377.3 389.1,377.3" fill="rgb(167, 163, 159)" stroke="rgb(167, 163, 159)" stroke-width="1.2" stroke-linejoin="round"/><polygon points="382.7,356.3 400.8,356.3 415.0,377.3 400.8,377.3" fill="rgb(168, 165, 160)" stroke="rgb(168, 165, 160)" stroke-width="1.2" stroke-linejoin="round"/><polygon points="400.8,356.3 421.5,356.3 431.3,377.3 415.0,377.3" fill="rgb(168, 165, 160)" stroke="rgb(168, 165, 160)" stroke-width="1.2" stroke-linejoin="round"/><polygon points="421.5,356.3 443.9,356.3 448.9,377.3 431.3,377.3" fill="rgb(167, 164, 159)" stroke="rgb(167, 164, 159)" stroke-width="1.2" stroke-linejoin="round"/><polygon points="443.9,356.3 467.2,356.3 467.2,377.3 448.9,377.3" fill="rgb(165, 162, 157)" stroke="rgb(165, 162, 157)" stroke-width="1.2" stroke-linejoin="round"/><polygon points="467.2,377.3 485.5,377.3 479.8,392.9 467.2,392.9" fill="rgb(152, 149, 144)" stroke="rgb(152, 149, 144)" stroke-width="1.2" stroke-linejoin="round"/><polygon points="485.5,377.3 503.1,377.3 491.9,392.9 479.8,392.9" fill="rgb(146, 143, 138)" stroke="rgb(146, 143, 138)" stroke-width="1.2" stroke-linejoin="round"/><polygon points="503.1,377.3 519.4,377.3 503.1,392.9 491.9,392.9" fill="rgb(140, 137, 133)" stroke="rgb(140, 137, 133)" stroke-width="1.2" stroke-linejoin="round"/><polygon points="519.4,377.3 533.6,377.3 512.9,392.9 503.1,392.9" fill="rgb(133, 131, 127)" stroke="rgb(133, 131, 127)" stroke-width="1.2" stroke-linejoin="round"/><polygon points="533.6,377.3 545.3,377.3 521.0,392.9 512.9,392.9" fill="rgb(127, 125, 122)" stroke="rgb(127, 125, 122)" stroke-width="1.2" stroke-linejoin="round"/><polygon points="545.3,377.3 553.9,377.3 527.0,392.9 521.0,392.9" fill="rgb(121, 120, 116)" stroke="rgb(121, 120, 116)" stroke-width="1.2" stroke-linejoin="round"/><polygon points="553.9,377.3 559.3,377.3 530.6,392.9 527.0,392.9" fill="rgb(116, 115, 112)" stroke="rgb(116, 115, 112)" stroke-width="1.2" stroke-linejoin="round"/><polygon points="559.3,377.3 561.1,377.3 531.9,392.9 530.6,392.9" fill="rgb(112, 111, 108)" stroke="rgb(112, 111, 108)" stroke-width="1.2" stroke-linejoin="round"/><polygon points="373.3,377.3 375.1,377.3 403.8,392.9 402.5,392.9" fill="rgb(150, 147, 143)" stroke="rgb(150, 147, 143)" stroke-width="1.2" stroke-linejoin="round"/><polygon points="375.1,377.3 380.5,377.3 407.4,392.9 403.8,392.9" fill="rgb(153, 150, 146)" stroke="rgb(153, 150, 146)" stroke-width="1.2" stroke-linejoin="round"/><polygon points="380.5,377.3 389.1,377.3 413.4,392.9 407.4,392.9" fill="rgb(155, 152, 147)" stroke="rgb(155, 152, 147)" stroke-width="1.2" stroke-linejoin="round"/><polygon points="389.1,377.3 400.8,377.3 421.5,392.9 413.4,392.9" fill="rgb(157, 154, 149)" stroke="rgb(157, 154, 149)" stroke-width="1.2" stroke-linejoin="round"/><polygon points="400.8,377.3 415.0,377.3 431.3,392.9 421.5,392.9" fill="rgb(158, 154, 149)" stroke="rgb(158, 154, 149)" stroke-width="1.2" stroke-linejoin="round"/><polygon points="415.0,377.3 431.3,377.3 442.5,392.9 431.3,392.9" fill="rgb(158, 154, 149)" stroke="rgb(158, 154, 149)" stroke-width="1.2" stroke-linejoin="round"/><polygon points="431.3,377.3 448.9,377.3 454.6,392.9 442.5,392.9" fill="rgb(157, 154, 149)" stroke="rgb(157, 154, 149)" stroke-width="1.2" stroke-linejoin="round"/><polygon points="448.9,377.3 467.2,377.3 467.2,392.9 454.6,392.9" fill="rgb(155, 152, 147)" stroke="rgb(155, 152, 147)" stroke-width="1.2" stroke-linejoin="round"/><polygon points="467.2,392.9 479.8,392.9 473.6,402.6 467.2,402.6" fill="rgb(144, 141, 136)" stroke="rgb(144, 141, 136)" stroke-width="1.2" stroke-linejoin="round"/><polygon points="479.8,392.9 491.9,392.9 479.8,402.6 473.6,402.6" fill="rgb(140, 137, 133)" stroke="rgb(140, 137, 133)" stroke-width="1.2" stroke-linejoin="round"/><polygon points="491.9,392.9 503.1,392.9 485.5,402.6 479.8,402.6" fill="rgb(136, 133, 129)" stroke="rgb(136, 133, 129)" stroke-width="1.2" stroke-linejoin="round"/><polygon points="503.1,392.9 512.9,392.9 490.5,402.6 485.5,402.6" fill="rgb(132, 130, 126)" stroke="rgb(132, 130, 126)" stroke-width="1.2" stroke-linejoin="round"/><polygon points="512.9,392.9 521.0,392.9 494.6,402.6 490.5,402.6" fill="rgb(128, 126, 122)" stroke="rgb(128, 126, 122)" stroke-width="1.2" stroke-linejoin="round"/><polygon points="521.0,392.9 527.0,392.9 497.7,402.6 494.6,402.6" fill="rgb(124, 122, 119)" stroke="rgb(124, 122, 119)" stroke-width="1.2" stroke-linejoin="round"/><polygon points="527.0,392.9 530.6,392.9 499.5,402.6 497.7,402.6" fill="rgb(121, 119, 116)" stroke="rgb(121, 119, 116)" stroke-width="1.2" stroke-linejoin="round"/><polygon points="530.6,392.9 531.9,392.9 500.2,402.6 499.5,402.6" fill="rgb(118, 117, 114)" stroke="rgb(118, 117, 114)" stroke-width="1.2" stroke-linejoin="round"/><polygon points="402.5,392.9 403.8,392.9 434.9,402.6 434.2,402.6" fill="rgb(143, 140, 136)" stroke="rgb(143, 140, 136)" stroke-width="1.2" stroke-linejoin="round"/><polygon points="403.8,392.9 407.4,392.9 436.7,402.6 434.9,402.6" fill="rgb(144, 142, 137)" stroke="rgb(144, 142, 137)" stroke-width="1.2" stroke-linejoin="round"/><polygon points="407.4,392.9 413.4,392.9 439.8,402.6 436.7,402.6" fill="rgb(146, 143, 139)" stroke="rgb(146, 143, 139)" stroke-width="1.2" stroke-linejoin="round"/><polygon points="413.4,392.9 421.5,392.9 443.9,402.6 439.8,402.6" fill="rgb(147, 144, 139)" stroke="rgb(147, 144, 139)" stroke-width="1.2" stroke-linejoin="round"/><polygon points="421.5,392.9 431.3,392.9 448.9,402.6 443.9,402.6" fill="rgb(147, 144, 140)" stroke="rgb(147, 144, 140)" stroke-width="1.2" stroke-linejoin="round"/><polygon points="431.3,392.9 442.5,392.9 454.6,402.6 448.9,402.6" fill="rgb(147, 144, 140)" stroke="rgb(147, 144, 140)" stroke-width="1.2" stroke-linejoin="round"/><polygon points="442.5,392.9 454.6,392.9 460.8,402.6 454.6,402.6" fill="rgb(147, 144, 139)" stroke="rgb(147, 144, 139)" stroke-width="1.2" stroke-linejoin="round"/><polygon points="454.6,392.9 467.2,392.9 467.2,402.6 460.8,402.6" fill="rgb(146, 143, 139)" stroke="rgb(146, 143, 139)" stroke-width="1.2" stroke-linejoin="round"/><polygon points="467.2,402.6 473.6,402.6 467.2,405.8 467.2,405.8" fill="rgb(136, 134, 130)" stroke="rgb(136, 134, 130)" stroke-width="1.2" stroke-linejoin="round"/><polygon points="473.6,402.6 479.8,402.6 467.2,405.8 467.2,405.8" fill="rgb(135, 133, 129)" stroke="rgb(135, 133, 129)" stroke-width="1.2" stroke-linejoin="round"/><polygon points="479.8,402.6 485.5,402.6 467.2,405.8 467.2,405.8" fill="rgb(134, 131, 127)" stroke="rgb(134, 131, 127)" stroke-width="1.2" stroke-linejoin="round"/><polygon points="485.5,402.6 490.5,402.6 467.2,405.8 467.2,405.8" fill="rgb(132, 130, 126)" stroke="rgb(132, 130, 126)" stroke-width="1.2" stroke-linejoin="round"/><polygon points="490.5,402.6 494.6,402.6 467.2,405.8 467.2,405.8" fill="rgb(131, 129, 125)" stroke="rgb(131, 129, 125)" stroke-width="1.2" stroke-linejoin="round"/><polygon points="494.6,402.6 497.7,402.6 467.2,405.8 467.2,405.8" fill="rgb(130, 128, 124)" stroke="rgb(130, 128, 124)" stroke-width="1.2" stroke-linejoin="round"/><polygon points="497.7,402.6 499.5,402.6 467.2,405.8 467.2,405.8" fill="rgb(129, 127, 123)" stroke="rgb(129, 127, 123)" stroke-width="1.2" stroke-linejoin="round"/><polygon points="499.5,402.6 500.2,402.6 467.2,405.8 467.2,405.8" fill="rgb(128, 126, 122)" stroke="rgb(128, 126, 122)" stroke-width="1.2" stroke-linejoin="round"/><polygon points="434.2,402.6 434.9,402.6 467.2,405.8 467.2,405.8" fill="rgb(136, 134, 130)" stroke="rgb(136, 134, 130)" stroke-width="1.2" stroke-linejoin="round"/><polygon points="434.9,402.6 436.7,402.6 467.2,405.8 467.2,405.8" fill="rgb(137, 134, 130)" stroke="rgb(137, 134, 130)" stroke-width="1.2" stroke-linejoin="round"/><polygon points="436.7,402.6 439.8,402.6 467.2,405.8 467.2,405.8" fill="rgb(137, 135, 131)" stroke="rgb(137, 135, 131)" stroke-width="1.2" stroke-linejoin="round"/><polygon points="439.8,402.6 443.9,402.6 467.2,405.8 467.2,405.8" fill="rgb(137, 135, 131)" stroke="rgb(137, 135, 131)" stroke-width="1.2" stroke-linejoin="round"/><polygon points="443.9,402.6 448.9,402.6 467.2,405.8 467.2,405.8" fill="rgb(138, 135, 131)" stroke="rgb(138, 135, 131)" stroke-width="1.2" stroke-linejoin="round"/><polygon points="448.9,402.6 454.6,402.6 467.2,405.8 467.2,405.8" fill="rgb(138, 135, 131)" stroke="rgb(138, 135, 131)" stroke-width="1.2" stroke-linejoin="round"/><polygon points="454.6,402.6 460.8,402.6 467.2,405.8 467.2,405.8" fill="rgb(138, 135, 131)" stroke="rgb(138, 135, 131)" stroke-width="1.2" stroke-linejoin="round"/><polygon points="460.8,402.6 467.2,402.6 467.2,405.8 467.2,405.8" fill="rgb(137, 135, 131)" stroke="rgb(137, 135, 131)" stroke-width="1.2" stroke-linejoin="round"/><polygon points="467.2,67.8 467.2,67.8 473.6,71.0 467.2,71.0" fill="rgb(192, 197, 203)"/><polygon points="467.2,67.8 467.2,67.8 479.8,71.0 473.6,71.0" fill="rgb(192, 196, 202)"/><polygon points="467.2,67.8 467.2,67.8 485.5,71.0 479.8,71.0" fill="rgb(191, 196, 202)"/><polygon points="467.2,67.8 467.2,67.8 490.5,71.0 485.5,71.0" fill="rgb(190, 195, 201)"/><polygon points="467.2,67.8 467.2,67.8 494.6,71.0 490.5,71.0" fill="rgb(189, 194, 200)"/><polygon points="467.2,67.8 467.2,67.8 497.7,71.0 494.6,71.0" fill="rgb(188, 193, 199)"/><polygon points="467.2,67.8 467.2,67.8 499.5,71.0 497.7,71.0" fill="rgb(188, 193, 199)"/><polygon points="467.2,67.8 467.2,67.8 500.2,71.0 499.5,71.0" fill="rgb(187, 192, 198)"/><polygon points="467.2,67.8 467.2,67.8 434.9,71.0 434.2,71.0" fill="rgb(192, 196, 202)"/><polygon points="467.2,67.8 467.2,67.8 436.7,71.0 434.9,71.0" fill="rgb(192, 197, 203)"/><polygon points="467.2,67.8 467.2,67.8 439.8,71.0 436.7,71.0" fill="rgb(193, 197, 203)"/><polygon points="467.2,67.8 467.2,67.8 443.9,71.0 439.8,71.0" fill="rgb(193, 198, 203)"/><polygon points="467.2,67.8 467.2,67.8 448.9,71.0 443.9,71.0" fill="rgb(193, 198, 204)"/><polygon points="467.2,67.8 467.2,67.8 454.6,71.0 448.9,71.0" fill="rgb(193, 198, 204)"/><polygon points="467.2,67.8 467.2,67.8 460.8,71.0 454.6,71.0" fill="rgb(193, 198, 203)"/><polygon points="467.2,67.8 467.2,67.8 467.2,71.0 460.8,71.0" fill="rgb(193, 197, 203)"/><polygon points="467.2,71.0 473.6,71.0 479.8,80.7 467.2,80.7" fill="rgb(198, 202, 207)"/><polygon points="473.6,71.0 479.8,71.0 491.9,80.7 479.8,80.7" fill="rgb(196, 200, 205)"/><polygon points="479.8,71.0 485.5,71.0 503.1,80.7 491.9,80.7" fill="rgb(194, 198, 204)"/><polygon points="485.5,71.0 490.5,71.0 512.9,80.7 503.1,80.7" fill="rgb(192, 196, 202)"/><polygon points="490.5,71.0 494.6,71.0 521.0,80.7 512.9,80.7" fill="rgb(189, 194, 199)"/><polygon points="494.6,71.0 497.7,71.0 527.0,80.7 521.0,80.7" fill="rgb(187, 192, 197)"/><polygon points="497.7,71.0 499.5,71.0 530.6,80.7 527.0,80.7" fill="rgb(184, 189, 195)"/><polygon points="499.5,71.0 500.2,71.0 531.9,80.7 530.6,80.7" fill="rgb(182, 187, 193)"/><polygon points="434.2,71.0 434.9,71.0 403.8,80.7 402.5,80.7" fill="rgb(196, 200, 206)"/><polygon points="434.9,71.0 436.7,71.0 407.4,80.7 403.8,80.7" fill="rgb(198, 202, 207)"/><polygon points="436.7,71.0 439.8,71.0 413.4,80.7 407.4,80.7" fill="rgb(199, 203, 208)"/><polygon points="439.8,71.0 443.9,71.0 421.5,80.7 413.4,80.7" fill="rgb(200, 204, 209)"/><polygon points="443.9,71.0 448.9,71.0 431.3,80.7 421.5,80.7" fill="rgb(201, 205, 210)"/><polygon points="448.9,71.0 454.6,71.0 442.5,80.7 431.3,80.7" fill="rgb(201, 205, 209)"/><polygon points="454.6,71.0 460.8,71.0 454.6,80.7 442.5,80.7" fill="rgb(200, 204, 209)"/><polygon points="460.8,71.0 467.2,71.0 467.2,80.7 454.6,80.7" fill="rgb(199, 203, 208)"/><polygon points="467.2,80.7 479.8,80.7 485.5,96.3 467.2,96.3" fill="rgb(202, 206, 210)"/><polygon points="479.8,80.7 491.9,80.7 503.1,96.3 485.5,96.3" fill="rgb(199, 203, 207)"/><polygon points="491.9,80.7 503.1,80.7 519.4,96.3 503.1,96.3" fill="rgb(196, 200, 204)"/><polygon points="503.1,80.7 512.9,80.7 533.6,96.3 519.4,96.3" fill="rgb(192, 196, 201)"/><polygon points="512.9,80.7 521.0,80.7 545.3,96.3 533.6,96.3" fill="rgb(188, 192, 197)"/><polygon points="521.0,80.7 527.0,80.7 553.9,96.3 545.3,96.3" fill="rgb(184, 189, 194)"/><polygon points="527.0,80.7 530.6,80.7 559.3,96.3 553.9,96.3" fill="rgb(180, 185, 190)"/><polygon points="530.6,80.7 531.9,80.7 561.1,96.3 559.3,96.3" fill="rgb(176, 181, 187)"/><polygon points="402.5,80.7 403.8,80.7 375.1,96.3 373.3,96.3" fill="rgb(199, 203, 207)"/><polygon points="403.8,80.7 407.4,80.7 380.5,96.3 375.1,96.3" fill="rgb(202, 205, 210)"/><polygon points="407.4,80.7 413.4,80.7 389.1,96.3 380.5,96.3" fill="rgb(204, 208, 212)"/><polygon points="413.4,80.7 421.5,80.7 400.8,96.3 389.1,96.3" fill="rgb(206, 209, 213)"/><polygon points="421.5,80.7 431.3,80.7 415.0,96.3 400.8,96.3" fill="rgb(207, 210, 214)"/><polygon points="431.3,80.7 442.5,80.7 431.3,96.3 415.0,96.3" fill="rgb(207, 210, 214)"/><polygon points="442.5,80.7 454.6,80.7 448.9,96.3 431.3,96.3" fill="rgb(206, 209, 213)"/><polygon points="454.6,80.7 467.2,80.7 467.2,96.3 448.9,96.3" fill="rgb(205, 208, 212)"/><polygon points="467.2,96.3 485.5,96.3 490.5,117.3 467.2,117.3" fill="rgb(205, 208, 210)"/><polygon points="485.5,96.3 503.1,96.3 512.9,117.3 490.5,117.3" fill="rgb(201, 204, 207)"/><polygon points="503.1,96.3 519.4,96.3 533.6,117.3 512.9,117.3" fill="rgb(197, 200, 203)"/><polygon points="519.4,96.3 533.6,96.3 551.7,117.3 533.6,117.3" fill="rgb(191, 195, 199)"/><polygon points="533.6,96.3 545.3,96.3 566.6,117.3 551.7,117.3" fill="rgb(186, 190, 194)"/><polygon points="545.3,96.3 553.9,96.3 577.6,117.3 566.6,117.3" fill="rgb(180, 185, 189)"/><polygon points="553.9,96.3 559.3,96.3 584.4,117.3 577.6,117.3" fill="rgb(175, 179, 185)"/><polygon points="559.3,96.3 561.1,96.3 586.7,117.3 584.4,117.3" fill="rgb(169, 174, 180)"/><polygon points="373.3,96.3 375.1,96.3 350.0,117.3 347.7,117.3" fill="rgb(201, 204, 207)"/><polygon points="375.1,96.3 380.5,96.3 356.8,117.3 350.0,117.3" fill="rgb(205, 207, 211)"/><polygon points="380.5,96.3 389.1,96.3 367.8,117.3 356.8,117.3" fill="rgb(208, 210, 213)"/><polygon points="389.1,96.3 400.8,96.3 382.7,117.3 367.8,117.3" fill="rgb(210, 212, 215)"/><polygon points="400.8,96.3 415.0,96.3 400.8,117.3 382.7,117.3" fill="rgb(211, 213, 216)"/><polygon points="415.0,96.3 431.3,96.3 421.5,117.3 400.8,117.3" fill="rgb(211, 213, 216)"/><polygon points="431.3,96.3 448.9,96.3 443.9,117.3 421.5,117.3" fill="rgb(210, 212, 215)"/><polygon points="448.9,96.3 467.2,96.3 467.2,117.3 443.9,117.3" fill="rgb(208, 210, 213)"/><polygon points="467.2,117.3 490.5,117.3 494.6,142.9 467.2,142.9" fill="rgb(206, 208, 210)"/><polygon points="490.5,117.3 512.9,117.3 521.0,142.9 494.6,142.9" fill="rgb(201, 203, 205)"/><polygon points="512.9,117.3 533.6,117.3 545.3,142.9 521.0,142.9" fill="rgb(196, 198, 201)"/><polygon points="533.6,117.3 551.7,117.3 566.6,142.9 545.3,142.9" fill="rgb(189, 192, 195)"/><polygon points="551.7,117.3 566.6,117.3 584.0,142.9 566.6,142.9" fill="rgb(183, 186, 189)"/><polygon points="566.6,117.3 577.6,117.3 597.0,142.9 584.0,142.9" fill="rgb(175, 179, 183)"/><polygon points="577.6,117.3 584.4,117.3 605.0,142.9 597.0,142.9" fill="rgb(168, 172, 177)"/><polygon points="584.4,117.3 586.7,117.3 607.7,142.9 605.0,142.9" fill="rgb(161, 166, 171)"/><polygon points="347.7,117.3 350.0,117.3 329.4,142.9 326.7,142.9" fill="rgb(201, 203, 206)"/><polygon points="350.0,117.3 356.8,117.3 337.4,142.9 329.4,142.9" fill="rgb(206, 207, 210)"/><polygon points="356.8,117.3 367.8,117.3 350.4,142.9 337.4,142.9" fill="rgb(210, 211, 213)"/><polygon points="367.8,117.3 382.7,117.3 367.8,142.9 350.4,142.9" fill="rgb(212, 213, 215)"/><polygon points="382.7,117.3 400.8,117.3 389.1,142.9 367.8,142.9" fill="rgb(214, 215, 216)"/><polygon points="400.8,117.3 421.5,117.3 413.4,142.9 389.1,142.9" fill="rgb(214, 215, 216)"/><polygon points="421.5,117.3 443.9,117.3 439.8,142.9 413.4,142.9" fill="rgb(213, 214, 215)"/><polygon points="443.9,117.3 467.2,117.3 467.2,142.9 439.8,142.9" fill="rgb(210, 211, 213)"/><polygon points="467.2,142.9 494.6,142.9 497.7,172.1 467.2,172.1" fill="rgb(206, 206, 207)"/><polygon points="494.6,142.9 521.0,142.9 527.0,172.1 497.7,172.1" fill="rgb(200, 201, 202)"/><polygon points="521.0,142.9 545.3,142.9 553.9,172.1 527.0,172.1" fill="rgb(194, 195, 197)"/><polygon points="545.3,142.9 566.6,142.9 577.6,172.1 553.9,172.1" fill="rgb(186, 189, 190)"/><polygon points="566.6,142.9 584.0,142.9 597.0,172.1 577.6,172.1" fill="rgb(178, 181, 183)"/><polygon points="584.0,142.9 597.0,142.9 611.5,172.1 597.0,172.1" fill="rgb(169, 173, 176)"/><polygon points="597.0,142.9 605.0,142.9 620.3,172.1 611.5,172.1" fill="rgb(161, 165, 169)"/><polygon points="605.0,142.9 607.7,142.9 623.3,172.1 620.3,172.1" fill="rgb(153, 158, 162)"/><polygon points="326.7,142.9 329.4,142.9 314.1,172.1 311.1,172.1" fill="rgb(199, 201, 203)"/><polygon points="329.4,142.9 337.4,142.9 322.9,172.1 314.1,172.1" fill="rgb(205, 206, 207)"/><polygon points="337.4,142.9 350.4,142.9 337.4,172.1 322.9,172.1" fill="rgb(209, 210, 211)"/><polygon points="350.4,142.9 367.8,142.9 356.8,172.1 337.4,172.1" fill="rgb(213, 213, 213)"/><polygon points="367.8,142.9 389.1,142.9 380.5,172.1 356.8,172.1" fill="rgb(214, 214, 215)"/><polygon points="389.1,142.9 413.4,142.9 407.4,172.1 380.5,172.1" fill="rgb(214, 214, 215)"/><polygon points="413.4,142.9 439.8,142.9 436.7,172.1 407.4,172.1" fill="rgb(213, 213, 213)"/><polygon points="439.8,142.9 467.2,142.9 467.2,172.1 436.7,172.1" fill="rgb(210, 210, 211)"/><polygon points="467.2,172.1 497.7,172.1 499.5,203.8 467.2,203.8" fill="rgb(203, 203, 202)"/><polygon points="497.7,172.1 527.0,172.1 530.6,203.8 499.5,203.8" fill="rgb(197, 198, 197)"/><polygon points="527.0,172.1 553.9,172.1 559.3,203.8 530.6,203.8" fill="rgb(190, 191, 191)"/><polygon points="553.9,172.1 577.6,172.1 584.4,203.8 559.3,203.8" fill="rgb(182, 184, 185)"/><polygon points="577.6,172.1 597.0,172.1 605.0,203.8 584.4,203.8" fill="rgb(173, 175, 176)"/><polygon points="597.0,172.1 611.5,172.1 620.3,203.8 605.0,203.8" fill="rgb(163, 166, 168)"/><polygon points="611.5,172.1 620.3,172.1 629.8,203.8 620.3,203.8" fill="rgb(154, 158, 161)"/><polygon points="620.3,172.1 623.3,172.1 633.0,203.8 629.8,203.8" fill="rgb(146, 150, 154)"/><polygon points="311.1,172.1 314.1,172.1 304.6,203.8 301.4,203.8" fill="rgb(196, 197, 198)"/><polygon points="314.1,172.1 322.9,172.1 314.1,203.8 304.6,203.8" fill="rgb(203, 203, 203)"/><polygon points="322.9,172.1 337.4,172.1 329.4,203.8 314.1,203.8" fill="rgb(207, 207, 207)"/><polygon points="337.4,172.1 356.8,172.1 350.0,203.8 329.4,203.8" fill="rgb(211, 210, 209)"/><polygon points="356.8,172.1 380.5,172.1 375.1,203.8 350.0,203.8" fill="rgb(213, 212, 211)"/><polygon points="380.5,172.1 407.4,172.1 403.8,203.8 375.1,203.8" fill="rgb(213, 212, 211)"/><polygon points="407.4,172.1 436.7,172.1 434.9,203.8 403.8,203.8" fill="rgb(211, 210, 209)"/><polygon points="436.7,172.1 467.2,172.1 467.2,203.8 434.9,203.8" fill="rgb(208, 207, 207)"/><polygon points="467.2,203.8 499.5,203.8 500.2,236.8 467.2,236.8" fill="rgb(199, 198, 197)"/><polygon points="499.5,203.8 530.6,203.8 531.9,236.8 500.2,236.8" fill="rgb(193, 192, 191)"/><polygon points="530.6,203.8 559.3,203.8 561.1,236.8 531.9,236.8" fill="rgb(186, 186, 185)"/><polygon points="559.3,203.8 584.4,203.8 586.7,236.8 561.1,236.8" fill="rgb(177, 178, 178)"/><polygon points="584.4,203.8 605.0,203.8 607.7,236.8 586.7,236.8" fill="rgb(167, 169, 169)"/><polygon points="605.0,203.8 620.3,203.8 623.3,236.8 607.7,236.8" fill="rgb(158, 160, 161)"/><polygon points="620.3,203.8 629.8,203.8 633.0,236.8 623.3,236.8" fill="rgb(148, 151, 153)"/><polygon points="629.8,203.8 633.0,203.8 636.2,236.8 633.0,236.8" fill="rgb(140, 143, 146)"/><polygon points="301.4,203.8 304.6,203.8 301.4,236.8 298.2,236.8" fill="rgb(192, 192, 192)"/><polygon points="304.6,203.8 314.1,203.8 311.1,236.8 301.4,236.8" fill="rgb(199, 198, 197)"/><polygon points="314.1,203.8 329.4,203.8 326.7,236.8 311.1,236.8" fill="rgb(204, 202, 201)"/><polygon points="329.4,203.8 350.0,203.8 347.7,236.8 326.7,236.8" fill="rgb(207, 206, 204)"/><polygon points="350.0,203.8 375.1,203.8 373.3,236.8 347.7,236.8" fill="rgb(209, 207, 205)"/><polygon points="375.1,203.8 403.8,203.8 402.5,236.8 373.3,236.8" fill="rgb(209, 207, 205)"/><polygon points="403.8,203.8 434.9,203.8 434.2,236.8 402.5,236.8" fill="rgb(207, 206, 204)"/><polygon points="434.9,203.8 467.2,203.8 467.2,236.8 434.2,236.8" fill="rgb(204, 203, 201)"/><polygon points="467.2,236.8 500.2,236.8 499.5,269.8 467.2,269.8" fill="rgb(193, 192, 189)"/><polygon points="500.2,236.8 531.9,236.8 530.6,269.8 499.5,269.8" fill="rgb(187, 185, 183)"/><polygon points="531.9,236.8 561.1,236.8 559.3,269.8 530.6,269.8" fill="rgb(179, 178, 176)"/><polygon points="561.1,236.8 586.7,236.8 584.4,269.8 559.3,269.8" fill="rgb(170, 169, 168)"/><polygon points="586.7,236.8 607.7,236.8 605.0,269.8 584.4,269.8" fill="rgb(159, 160, 159)"/><polygon points="607.7,236.8 623.3,236.8 620.3,269.8 605.0,269.8" fill="rgb(149, 150, 151)"/><polygon points="623.3,236.8 633.0,236.8 629.8,269.8 620.3,269.8" fill="rgb(139, 141, 142)"/><polygon points="633.0,236.8 636.2,236.8 633.0,269.8 629.8,269.8" fill="rgb(131, 133, 135)"/><polygon points="298.2,236.8 301.4,236.8 304.6,269.8 301.4,269.8" fill="rgb(187, 186, 185)"/><polygon points="301.4,236.8 311.1,236.8 314.1,269.8 304.6,269.8" fill="rgb(193, 191, 190)"/><polygon points="311.1,236.8 326.7,236.8 329.4,269.8 314.1,269.8" fill="rgb(198, 196, 194)"/><polygon points="326.7,236.8 347.7,236.8 350.0,269.8 329.4,269.8" fill="rgb(202, 199, 197)"/><polygon points="347.7,236.8 373.3,236.8 375.1,269.8 350.0,269.8" fill="rgb(203, 201, 198)"/><polygon points="373.3,236.8 402.5,236.8 403.8,269.8 375.1,269.8" fill="rgb(204, 201, 198)"/><polygon points="402.5,236.8 434.2,236.8 434.9,269.8 403.8,269.8" fill="rgb(202, 200, 197)"/><polygon points="434.2,236.8 467.2,236.8 467.2,269.8 434.9,269.8" fill="rgb(199, 197, 194)"/><polygon points="467.2,269.8 499.5,269.8 497.7,301.5 467.2,301.5" fill="rgb(186, 184, 180)"/><polygon points="499.5,269.8 530.6,269.8 527.0,301.5 497.7,301.5" fill="rgb(178, 176, 173)"/><polygon points="530.6,269.8 559.3,269.8 553.9,301.5 527.0,301.5" fill="rgb(169, 168, 165)"/><polygon points="559.3,269.8 584.4,269.8 577.6,301.5 553.9,301.5" fill="rgb(160, 159, 157)"/><polygon points="584.4,269.8 605.0,269.8 597.0,301.5 577.6,301.5" fill="rgb(149, 149, 147)"/><polygon points="605.0,269.8 620.3,269.8 611.5,301.5 597.0,301.5" fill="rgb(138, 139, 138)"/><polygon points="620.3,269.8 629.8,269.8 620.3,301.5 611.5,301.5" fill="rgb(129, 130, 130)"/><polygon points="629.8,269.8 633.0,269.8 623.3,301.5 620.3,301.5" fill="rgb(120, 122, 123)"/><polygon points="301.4,269.8 304.6,269.8 314.1,301.5 311.1,301.5" fill="rgb(180, 179, 177)"/><polygon points="304.6,269.8 314.1,269.8 322.9,301.5 314.1,301.5" fill="rgb(186, 184, 182)"/><polygon points="314.1,269.8 329.4,269.8 337.4,301.5 322.9,301.5" fill="rgb(191, 189, 186)"/><polygon points="329.4,269.8 350.0,269.8 356.8,301.5 337.4,301.5" fill="rgb(195, 192, 188)"/><polygon points="350.0,269.8 375.1,269.8 380.5,301.5 356.8,301.5" fill="rgb(196, 193, 190)"/><polygon points="375.1,269.8 403.8,269.8 407.4,301.5 380.5,301.5" fill="rgb(196, 193, 190)"/><polygon points="403.8,269.8 434.9,269.8 436.7,301.5 407.4,301.5" fill="rgb(195, 192, 188)"/><polygon points="434.9,269.8 467.2,269.8 467.2,301.5 436.7,301.5" fill="rgb(192, 189, 185)"/><polygon points="467.2,301.5 497.7,301.5 494.6,330.7 467.2,330.7" fill="rgb(178, 175, 171)"/><polygon points="497.7,301.5 527.0,301.5 521.0,330.7 494.6,330.7" fill="rgb(169, 167, 163)"/><polygon points="527.0,301.5 553.9,301.5 545.3,330.7 521.0,330.7" fill="rgb(160, 158, 155)"/><polygon points="553.9,301.5 577.6,301.5 566.6,330.7 545.3,330.7" fill="rgb(150, 149, 146)"/><polygon points="577.6,301.5 597.0,301.5 584.0,330.7 566.6,330.7" fill="rgb(140, 139, 137)"/><polygon points="597.0,301.5 611.5,301.5 597.0,330.7 584.0,330.7" fill="rgb(130, 130, 128)"/><polygon points="611.5,301.5 620.3,301.5 605.0,330.7 597.0,330.7" fill="rgb(120, 121, 120)"/><polygon points="620.3,301.5 623.3,301.5 607.7,330.7 605.0,330.7" fill="rgb(112, 113, 113)"/><polygon points="311.1,301.5 314.1,301.5 329.4,330.7 326.7,330.7" fill="rgb(173, 171, 168)"/><polygon points="314.1,301.5 322.9,301.5 337.4,330.7 329.4,330.7" fill="rgb(179, 176, 173)"/><polygon points="322.9,301.5 337.4,301.5 350.4,330.7 337.4,330.7" fill="rgb(183, 180, 176)"/><polygon points="337.4,301.5 356.8,301.5 367.8,330.7 350.4,330.7" fill="rgb(186, 183, 179)"/><polygon points="356.8,301.5 380.5,301.5 389.1,330.7 367.8,330.7" fill="rgb(188, 184, 180)"/><polygon points="380.5,301.5 407.4,301.5 413.4,330.7 389.1,330.7" fill="rgb(188, 184, 180)"/><polygon points="407.4,301.5 436.7,301.5 439.8,330.7 413.4,330.7" fill="rgb(186, 183, 179)"/><polygon points="436.7,301.5 467.2,301.5 467.2,330.7 439.8,330.7" fill="rgb(184, 180, 176)"/><polygon points="467.2,330.7 494.6,330.7 490.5,356.3 467.2,356.3" fill="rgb(169, 166, 161)"/><polygon points="494.6,330.7 521.0,330.7 512.9,356.3 490.5,356.3" fill="rgb(161, 158, 154)"/><polygon points="521.0,330.7 545.3,330.7 533.6,356.3 512.9,356.3" fill="rgb(152, 150, 146)"/><polygon points="545.3,330.7 566.6,330.7 551.7,356.3 533.6,356.3" fill="rgb(143, 141, 138)"/><polygon points="566.6,330.7 584.0,330.7 566.6,356.3 551.7,356.3" fill="rgb(133, 132, 129)"/><polygon points="584.0,330.7 597.0,330.7 577.6,356.3 566.6,356.3" fill="rgb(124, 123, 121)"/><polygon points="597.0,330.7 605.0,330.7 584.4,356.3 577.6,356.3" fill="rgb(115, 115, 114)"/><polygon points="605.0,330.7 607.7,330.7 586.7,356.3 584.4,356.3" fill="rgb(108, 109, 107)"/><polygon points="326.7,330.7 329.4,330.7 350.0,356.3 347.7,356.3" fill="rgb(165, 163, 159)"/><polygon points="329.4,330.7 337.4,330.7 356.8,356.3 350.0,356.3" fill="rgb(170, 167, 164)"/><polygon points="337.4,330.7 350.4,330.7 367.8,356.3 356.8,356.3" fill="rgb(174, 171, 167)"/><polygon points="350.4,330.7 367.8,330.7 382.7,356.3 367.8,356.3" fill="rgb(177, 173, 169)"/><polygon points="367.8,330.7 389.1,330.7 400.8,356.3 382.7,356.3" fill="rgb(178, 175, 170)"/><polygon points="389.1,330.7 413.4,330.7 421.5,356.3 400.8,356.3" fill="rgb(178, 175, 170)"/><polygon points="413.4,330.7 439.8,330.7 443.9,356.3 421.5,356.3" fill="rgb(177, 174, 169)"/><polygon points="439.8,330.7 467.2,330.7 467.2,356.3 443.9,356.3" fill="rgb(175, 171, 166)"/><polygon points="467.2,356.3 490.5,356.3 485.5,377.3 467.2,377.3" fill="rgb(160, 157, 152)"/><polygon points="490.5,356.3 512.9,356.3 503.1,377.3 485.5,377.3" fill="rgb(153, 150, 146)"/><polygon points="512.9,356.3 533.6,356.3 519.4,377.3 503.1,377.3" fill="rgb(145, 143, 138)"/><polygon points="533.6,356.3 551.7,356.3 533.6,377.3 519.4,377.3" fill="rgb(137, 135, 131)"/><polygon points="551.7,356.3 566.6,356.3 545.3,377.3 533.6,377.3" fill="rgb(129, 127, 124)"/><polygon points="566.6,356.3 577.6,356.3 553.9,377.3 545.3,377.3" fill="rgb(121, 120, 117)"/><polygon points="577.6,356.3 584.4,356.3 559.3,377.3 553.9,377.3" fill="rgb(114, 114, 111)"/><polygon points="584.4,356.3 586.7,356.3 561.1,377.3 559.3,377.3" fill="rgb(108, 108, 106)"/><polygon points="347.7,356.3 350.0,356.3 375.1,377.3 373.3,377.3" fill="rgb(157, 155, 151)"/><polygon points="350.0,356.3 356.8,356.3 380.5,377.3 375.1,377.3" fill="rgb(161, 158, 154)"/><polygon points="356.8,356.3 367.8,356.3 389.1,377.3 380.5,377.3" fill="rgb(165, 161, 157)"/><polygon points="367.8,356.3 382.7,356.3 400.8,377.3 389.1,377.3" fill="rgb(167, 163, 159)"/><polygon points="382.7,356.3 400.8,356.3 415.0,377.3 400.8,377.3" fill="rgb(168, 165, 160)"/><polygon points="400.8,356.3 421.5,356.3 431.3,377.3 415.0,377.3" fill="rgb(168, 165, 160)"/><polygon points="421.5,356.3 443.9,356.3 448.9,377.3 431.3,377.3" fill="rgb(167, 164, 159)"/><polygon points="443.9,356.3 467.2,356.3 467.2,377.3 448.9,377.3" fill="rgb(165, 162, 157)"/><polygon points="467.2,377.3 485.5,377.3 479.8,392.9 467.2,392.9" fill="rgb(152, 149, 144)"/><polygon points="485.5,377.3 503.1,377.3 491.9,392.9 479.8,392.9" fill="rgb(146, 143, 138)"/><polygon points="503.1,377.3 519.4,377.3 503.1,392.9 491.9,392.9" fill="rgb(140, 137, 133)"/><polygon points="519.4,377.3 533.6,377.3 512.9,392.9 503.1,392.9" fill="rgb(133, 131, 127)"/><polygon points="533.6,377.3 545.3,377.3 521.0,392.9 512.9,392.9" fill="rgb(127, 125, 122)"/><polygon points="545.3,377.3 553.9,377.3 527.0,392.9 521.0,392.9" fill="rgb(121, 120, 116)"/><polygon points="553.9,377.3 559.3,377.3 530.6,392.9 527.0,392.9" fill="rgb(116, 115, 112)"/><polygon points="559.3,377.3 561.1,377.3 531.9,392.9 530.6,392.9" fill="rgb(112, 111, 108)"/><polygon points="373.3,377.3 375.1,377.3 403.8,392.9 402.5,392.9" fill="rgb(150, 147, 143)"/><polygon points="375.1,377.3 380.5,377.3 407.4,392.9 403.8,392.9" fill="rgb(153, 150, 146)"/><polygon points="380.5,377.3 389.1,377.3 413.4,392.9 407.4,392.9" fill="rgb(155, 152, 147)"/><polygon points="389.1,377.3 400.8,377.3 421.5,392.9 413.4,392.9" fill="rgb(157, 154, 149)"/><polygon points="400.8,377.3 415.0,377.3 431.3,392.9 421.5,392.9" fill="rgb(158, 154, 149)"/><polygon points="415.0,377.3 431.3,377.3 442.5,392.9 431.3,392.9" fill="rgb(158, 154, 149)"/><polygon points="431.3,377.3 448.9,377.3 454.6,392.9 442.5,392.9" fill="rgb(157, 154, 149)"/><polygon points="448.9,377.3 467.2,377.3 467.2,392.9 454.6,392.9" fill="rgb(155, 152, 147)"/><polygon points="467.2,392.9 479.8,392.9 473.6,402.6 467.2,402.6" fill="rgb(144, 141, 136)"/><polygon points="479.8,392.9 491.9,392.9 479.8,402.6 473.6,402.6" fill="rgb(140, 137, 133)"/><polygon points="491.9,392.9 503.1,392.9 485.5,402.6 479.8,402.6" fill="rgb(136, 133, 129)"/><polygon points="503.1,392.9 512.9,392.9 490.5,402.6 485.5,402.6" fill="rgb(132, 130, 126)"/><polygon points="512.9,392.9 521.0,392.9 494.6,402.6 490.5,402.6" fill="rgb(128, 126, 122)"/><polygon points="521.0,392.9 527.0,392.9 497.7,402.6 494.6,402.6" fill="rgb(124, 122, 119)"/><polygon points="527.0,392.9 530.6,392.9 499.5,402.6 497.7,402.6" fill="rgb(121, 119, 116)"/><polygon points="530.6,392.9 531.9,392.9 500.2,402.6 499.5,402.6" fill="rgb(118, 117, 114)"/><polygon points="402.5,392.9 403.8,392.9 434.9,402.6 434.2,402.6" fill="rgb(143, 140, 136)"/><polygon points="403.8,392.9 407.4,392.9 436.7,402.6 434.9,402.6" fill="rgb(144, 142, 137)"/><polygon points="407.4,392.9 413.4,392.9 439.8,402.6 436.7,402.6" fill="rgb(146, 143, 139)"/><polygon points="413.4,392.9 421.5,392.9 443.9,402.6 439.8,402.6" fill="rgb(147, 144, 139)"/><polygon points="421.5,392.9 431.3,392.9 448.9,402.6 443.9,402.6" fill="rgb(147, 144, 140)"/><polygon points="431.3,392.9 442.5,392.9 454.6,402.6 448.9,402.6" fill="rgb(147, 144, 140)"/><polygon points="442.5,392.9 454.6,392.9 460.8,402.6 454.6,402.6" fill="rgb(147, 144, 139)"/><polygon points="454.6,392.9 467.2,392.9 467.2,402.6 460.8,402.6" fill="rgb(146, 143, 139)"/><polygon points="467.2,402.6 473.6,402.6 467.2,405.8 467.2,405.8" fill="rgb(136, 134, 130)"/><polygon points="473.6,402.6 479.8,402.6 467.2,405.8 467.2,405.8" fill="rgb(135, 133, 129)"/><polygon points="479.8,402.6 485.5,402.6 467.2,405.8 467.2,405.8" fill="rgb(134, 131, 127)"/><polygon points="485.5,402.6 490.5,402.6 467.2,405.8 467.2,405.8" fill="rgb(132, 130, 126)"/><polygon points="490.5,402.6 494.6,402.6 467.2,405.8 467.2,405.8" fill="rgb(131, 129, 125)"/><polygon points="494.6,402.6 497.7,402.6 467.2,405.8 467.2,405.8" fill="rgb(130, 128, 124)"/><polygon points="497.7,402.6 499.5,402.6 467.2,405.8 467.2,405.8" fill="rgb(129, 127, 123)"/><polygon points="499.5,402.6 500.2,402.6 467.2,405.8 467.2,405.8" fill="rgb(128, 126, 122)"/><polygon points="434.2,402.6 434.9,402.6 467.2,405.8 467.2,405.8" fill="rgb(136, 134, 130)"/><polygon points="434.9,402.6 436.7,402.6 467.2,405.8 467.2,405.8" fill="rgb(137, 134, 130)"/><polygon points="436.7,402.6 439.8,402.6 467.2,405.8 467.2,405.8" fill="rgb(137, 135, 131)"/><polygon points="439.8,402.6 443.9,402.6 467.2,405.8 467.2,405.8" fill="rgb(137, 135, 131)"/><polygon points="443.9,402.6 448.9,402.6 467.2,405.8 467.2,405.8" fill="rgb(138, 135, 131)"/><polygon points="448.9,402.6 454.6,402.6 467.2,405.8 467.2,405.8" fill="rgb(138, 135, 131)"/><polygon points="454.6,402.6 460.8,402.6 467.2,405.8 467.2,405.8" fill="rgb(138, 135, 131)"/><polygon points="460.8,402.6 467.2,402.6 467.2,405.8 467.2,405.8" fill="rgb(137, 135, 131)"/><line x1="389.4" y1="142.3" x2="397.1" y2="191.7" stroke="#f39a38" stroke-opacity="1" stroke-width="2.9" stroke-linecap="round"/><line x1="386.5" y1="150" x2="392.9" y2="198.5" stroke="#f39a38" stroke-opacity="1" stroke-width="2.9" stroke-linecap="round"/><line x1="403.3" y1="137.5" x2="410.3" y2="184.9" stroke="#f39a38" stroke-opacity="1" stroke-width="2.9" stroke-linecap="round"/><line x1="416.1" y1="120" x2="422.7" y2="168.4" stroke="#f39a38" stroke-opacity="1" stroke-width="2.9" stroke-linecap="round"/><line x1="426.2" y1="140.4" x2="433" y2="187.8" stroke="#f39a38" stroke-opacity="0.45" stroke-width="2.9" stroke-linecap="round"/><line x1="463.9" y1="105.5" x2="470.7" y2="167.5" stroke="#f39a38" stroke-opacity="1" stroke-width="2.9" stroke-linecap="round"/><line x1="461.5" y1="121" x2="468" y2="167.5" stroke="#f39a38" stroke-opacity="1" stroke-width="2.9" stroke-linecap="round"/><line x1="456.8" y1="161.7" x2="464.5" y2="209.1" stroke="#f39a38" stroke-opacity="1" stroke-width="2.9" stroke-linecap="round"/><line x1="485.8" y1="145.2" x2="492.4" y2="194.6" stroke="#f39a38" stroke-opacity="1" stroke-width="2.9" stroke-linecap="round"/><line x1="500.7" y1="116.1" x2="507.5" y2="163.6" stroke="#f39a38" stroke-opacity="1" stroke-width="2.9" stroke-linecap="round"/><line x1="519.5" y1="132.6" x2="526.5" y2="181" stroke="#f39a38" stroke-opacity="1" stroke-width="2.9" stroke-linecap="round"/><line x1="528.4" y1="143.3" x2="536.6" y2="192.6" stroke="#f39a38" stroke-opacity="1" stroke-width="2.9" stroke-linecap="round"/><line x1="535" y1="162.6" x2="541.4" y2="211" stroke="#f39a38" stroke-opacity="1" stroke-width="2.9" stroke-linecap="round"/><line x1="400.6" y1="226.1" x2="407.2" y2="272.6" stroke="#f39a38" stroke-opacity="1" stroke-width="2.9" stroke-linecap="round"/><line x1="436.8" y1="263.9" x2="445.5" y2="314.3" stroke="#f39a38" stroke-opacity="1" stroke-width="2.9" stroke-linecap="round"/><line x1="445.1" y1="250.4" x2="451.3" y2="301.7" stroke="#f39a38" stroke-opacity="1" stroke-width="2.9" stroke-linecap="round"/><line x1="488.5" y1="246.5" x2="495.5" y2="294.9" stroke="#f39a38" stroke-opacity="1" stroke-width="2.9" stroke-linecap="round"/><line x1="508.5" y1="258.1" x2="515.3" y2="305.6" stroke="#f39a38" stroke-opacity="1" stroke-width="2.9" stroke-linecap="round"/><line x1="515.7" y1="247.5" x2="523.4" y2="298.8" stroke="#f39a38" stroke-opacity="1" stroke-width="2.9" stroke-linecap="round"/><line x1="441" y1="25.3" x2="447.2" y2="72.6" stroke="#f39a38" stroke-opacity="1" stroke-width="2.9" stroke-linecap="round"/><line x1="414.6" y1="181" x2="420" y2="239" stroke="#f39a38" stroke-opacity="0.4" stroke-width="2.9" stroke-linecap="round"/><line x1="474.6" y1="161.6" x2="486" y2="239" stroke="#f39a38" stroke-opacity="0.35" stroke-width="2.9" stroke-linecap="round"/><line x1="409" y1="207" x2="416" y2="262" stroke="#f39a38" stroke-opacity="0.4" stroke-width="2.9" stroke-linecap="round"/><line x1="484" y1="205" x2="490" y2="248" stroke="#f39a38" stroke-opacity="0.35" stroke-width="2.9" stroke-linecap="round"/><line x1="497" y1="213" x2="505" y2="258" stroke="#f39a38" stroke-opacity="0.3" stroke-width="2.9" stroke-linecap="round"/><line x1="511" y1="201" x2="517" y2="248" stroke="#f39a38" stroke-opacity="0.3" stroke-width="2.9" stroke-linecap="round"/><line x1="525" y1="190" x2="533" y2="240" stroke="#f39a38" stroke-opacity="0.3" stroke-width="2.9" stroke-linecap="round"/><line x1="537" y1="210" x2="543" y2="250" stroke="#f39a38" stroke-opacity="0.3" stroke-width="2.9" stroke-linecap="round"/><circle cx="466.8" cy="236.8" r="3.3" fill="#e3a53c" stroke="#3b2a12" stroke-width="1"/></g></svg>
<div class="abs" style="left:51px;top:-8px;width:95px;height:16.5px;background:#474747;border-radius:4px;overflow:hidden"><div class="abs" style="left:0;top:0;width:17.5px;height:16.5px;background:#4772b3"></div><div class="abs" style="left:18.5px;top:0;width:1px;height:16.5px;background:#3a3a3a"></div><div class="abs" style="left:37.5px;top:0;width:1px;height:16.5px;background:#3a3a3a"></div><div class="abs" style="left:56.5px;top:0;width:1px;height:16.5px;background:#3a3a3a"></div><div class="abs" style="left:75.5px;top:0;width:1px;height:16.5px;background:#3a3a3a"></div></div>
<svg class="abs" style="left:51px;top:0" width="95" height="9"><path d="M2.5,-2 V5.8 H15.8 V-2" fill="none" stroke="#fff" stroke-width="1.2" stroke-dasharray="2.2,1.6"/><path d="M21,-3 H34 V2 H30 V6.5 H21 Z" fill="#d4d4d4"/><path d="M40.5,-2 V5.8 H53 V-2" fill="none" stroke="#c8c8c8" stroke-width="1.2" stroke-dasharray="2,1.6"/><rect x="47" y="-3" width="7" height="5" fill="#d4d4d4"/><path d="M59.5,-3 H66 V2 H72 V6.5 H59.5 Z M66,2 V6.5" fill="#d4d4d4"/><rect x="66" y="-3" width="6" height="5" fill="#5a5a5a"/><path d="M78.5,-2 V5.8 H92 V-2" fill="none" stroke="#c8c8c8" stroke-width="1.2" stroke-dasharray="2,1.6"/><rect x="81.5" y="-3" width="7" height="6" fill="#bdbdbd"/></svg>
<div class="abs" style="left:51px;top:22px;width:38px;height:67px;background:#282828;border-radius:5px"></div>
<div class="abs" style="left:51px;top:97px;width:38px;height:137px;background:#282828;border-radius:5px"></div>
<div class="abs" style="left:51px;top:242px;width:38px;height:68px;background:#282828;border-radius:5px"></div>
<div class="abs" style="left:51px;top:317px;width:38px;height:18px;background:#282828;border-radius:5px 5px 0 0"></div>
<div class="abs" style="left:51px;top:22px;width:38px;height:33px;background:#4772b3;border-radius:5px 5px 0 0"></div>
<svg class="abs" style="left:0;top:0" width="100" height="338"><defs><clipPath id="tbc"><rect x="0" y="0" width="100" height="335"/></clipPath></defs><g clip-path="url(#tbc)"><rect x="51" y="130.0" width="38" height="1" fill="#3a3a3a"/><rect x="51" y="165.0" width="38" height="1" fill="#3a3a3a"/><rect x="51" y="200.0" width="38" height="1" fill="#3a3a3a"/><rect x="51" y="275.0" width="38" height="1" fill="#3a3a3a"/><rect x="59.5" y="29.5" width="21" height="21" fill="none" stroke="#d8cf86" stroke-width="1.3" stroke-dasharray="3,2" stroke-dashoffset="1"/><path d="M66.5,33.5 L66.5,45.5 L69.6,42.4 L74.5,42.2 Z" fill="#e3e9f2"/><path d="M87.5,52.5 L87.5,48.5 L83.5,52.5 Z" fill="#a9bfe0"/><circle cx="70" cy="72.3" r="10" fill="none" stroke="#ececec" stroke-width="1.5"/><circle cx="70" cy="72.3" r="10" fill="none" stroke="#8e3a3a" stroke-width="1.6" stroke-dasharray="3.5,4.35" stroke-dashoffset="1.8"/><path d="M70,65 V70 M70,74.5 V79.5 M62.8,72.3 H67.8 M72.2,72.3 H77.2" stroke="#9a9a9a" stroke-width="1.4"/><path d="M70,101.5 l-4,4.8 h8 Z M70,124.6 l-4,-4.8 h8 Z M58.2,113 l4.8,-4 v8 Z M81.8,113 l-4.8,-4 v8 Z" fill="#e2e2e2"/><path d="M70,107.5 V111 M70,115 V118.5 M64,113 H67.6 M72.4,113 H76" stroke="#e2e2e2" stroke-width="1.8"/><path d="M61.5,144.5 A10,10 0 0 1 77.5,140.5 M78.5,151 A10,10 0 0 1 62.5,155" fill="none" stroke="#e2e2e2" stroke-width="1.4"/><path d="M58.5,147 h6 l-3,4.5 Z M81.5,149 h-6 l3,-4.5 Z" fill="#e2e2e2"/><path d="M70,143.5 l4.5,4.5 l-4.5,4.5 l-4.5,-4.5 Z" fill="#a8a8a8"/><path d="M62.5,182 V174.8 H78.2 V190.3 H71" fill="none" stroke="#e2e2e2" stroke-width="1.3"/><rect x="61.8" y="182.3" width="8.5" height="9.5" fill="#e2e2e2"/><path d="M72,182 L77,177" fill="none" stroke="#e2e2e2" stroke-width="1.5"/><path d="M77.6,176.4 l-5,0.8 l4.2,4.2 Z" fill="#e2e2e2"/><path d="M87.5,198 L87.5,193.8 L83.3,198 Z" fill="#aaa"/><circle cx="70" cy="218" r="10" fill="none" stroke="#e2e2e2" stroke-width="1.3" stroke-dasharray="5.2,2.65" stroke-dashoffset="2.6"/><rect x="65.8" y="213.8" width="8.4" height="8.4" fill="#e2e2e2"/><path d="M70,206.5 l-3,3.6 h6 Z M70,229.5 l-3,-3.6 h6 Z M58.5,218 l3.6,-3 v6 Z M81.5,218 l-3.6,-3 v6 Z" fill="#e2e2e2"/><path d="M58,263.5 L59.5,259 L71.5,247 L75.5,251 L63.5,263 Z" fill="#e2e2e2"/><path d="M59,264.5 Q62,268 66.5,265 Q71,261 73,260.5 Q77,259.5 82,265" fill="none" stroke="#86d9bb" stroke-width="1.2"/><path d="M87.5,273 L87.5,269.5 L84,273 Z" fill="#aaa"/><path d="M65.5,302 V288 A14,14 0 0 1 79.5,302 Z" fill="#5fd6a0"/><path d="M65.5,289.5 A12.5,12.5 0 0 1 78,302" fill="none" stroke="#1f3a2c" stroke-width="1"/><path d="M60.8,281.5 H65.8 V302 H82 V304.8 H60.8 Z" fill="#e2e2e2"/><path d="M62.5,285 h3.3 M62.5,288.5 h3.3 M62.5,292 h3.3 M62.5,295.5 h3.3 M62.5,299 h3.3 M68,302 v1.8 M71.5,302 v1.8 M75,302 v1.8 M78.5,302 v1.8" stroke="#555" stroke-width="0.9"/><path d="M56.8,323.8 h8 M60.8,319.8 v8" stroke="#86d9bb" stroke-width="2"/><path d="M62.5,330.5 l5,-4 h14 v14 M62.5,330.5 h14 l5,-4 M76.5,330.5 v8 M62.5,330.5 v8" fill="none" stroke="#86d9bb" stroke-width="1.2"/></g></svg>
<div class="t" style="left:107.0px;top:25.7px;color:#f2f2f2;font-size:17px;">Right Orthographic</div>
<div class="t" style="left:107.0px;top:51.5px;color:#f2f2f2;font-size:17px;">(1) Collection | Curves.001</div>
<div class="t" style="left:107.0px;top:77.3px;color:#f2f2f2;font-size:17px;">10 Centimeters</div>
<div class="t" style="left:107.0px;top:102.9px;color:#f2f2f2;font-size:17px;">Rendering Done</div>
<div class="abs" style="left:0;top:0;width:39px;height:335px;overflow:hidden">
<div class="abs" style="left:0;top:0;width:39px;height:7.5px;background:#2c2c2c"></div>
<div class="t" style="left:-3px;top:-12px;color:#d2d2d2;font-size:17.5px">est_p</div>
<div class="t" style="left:-2.5px;top:311.5px;color:#dcdcdc;font-size:15.8px;">Colum</div>
</div>
<div class="abs" style="left:39px;top:300px;width:3px;height:38px;background:#161616"></div>
<div class="abs" style="left:0;top:338px;width:981px;height:548px;background:#1d1d1d"></div>
<div class="abs" style="left:0;top:338px;width:981px;height:2px;background:#262626"></div>
<svg class="abs" style="left:0;top:0" width="981" height="886"><rect x="42.7" y="412.2" width="3" height="1.6" fill="#2a2a2a"/><rect x="42.7" y="507.9" width="3" height="1.6" fill="#2a2a2a"/><rect x="42.7" y="603.6" width="3" height="1.6" fill="#2a2a2a"/><rect x="42.7" y="699.3" width="3" height="1.6" fill="#2a2a2a"/><rect x="42.7" y="795.0" width="3" height="1.6" fill="#2a2a2a"/><rect x="138.4" y="412.2" width="3" height="1.6" fill="#2a2a2a"/><rect x="138.4" y="507.9" width="3" height="1.6" fill="#2a2a2a"/><rect x="138.4" y="603.6" width="3" height="1.6" fill="#2a2a2a"/><rect x="138.4" y="699.3" width="3" height="1.6" fill="#2a2a2a"/><rect x="138.4" y="795.0" width="3" height="1.6" fill="#2a2a2a"/><rect x="234.1" y="412.2" width="3" height="1.6" fill="#2a2a2a"/><rect x="234.1" y="507.9" width="3" height="1.6" fill="#2a2a2a"/><rect x="234.1" y="603.6" width="3" height="1.6" fill="#2a2a2a"/><rect x="234.1" y="699.3" width="3" height="1.6" fill="#2a2a2a"/><rect x="234.1" y="795.0" width="3" height="1.6" fill="#2a2a2a"/><rect x="329.8" y="412.2" width="3" height="1.6" fill="#2a2a2a"/><rect x="329.8" y="507.9" width="3" height="1.6" fill="#2a2a2a"/><rect x="329.8" y="603.6" width="3" height="1.6" fill="#2a2a2a"/><rect x="329.8" y="699.3" width="3" height="1.6" fill="#2a2a2a"/><rect x="329.8" y="795.0" width="3" height="1.6" fill="#2a2a2a"/><rect x="425.5" y="412.2" width="3" height="1.6" fill="#2a2a2a"/><rect x="425.5" y="507.9" width="3" height="1.6" fill="#2a2a2a"/><rect x="425.5" y="603.6" width="3" height="1.6" fill="#2a2a2a"/><rect x="425.5" y="699.3" width="3" height="1.6" fill="#2a2a2a"/><rect x="425.5" y="795.0" width="3" height="1.6" fill="#2a2a2a"/><rect x="521.2" y="412.2" width="3" height="1.6" fill="#2a2a2a"/><rect x="521.2" y="507.9" width="3" height="1.6" fill="#2a2a2a"/><rect x="521.2" y="603.6" width="3" height="1.6" fill="#2a2a2a"/><rect x="521.2" y="699.3" width="3" height="1.6" fill="#2a2a2a"/><rect x="521.2" y="795.0" width="3" height="1.6" fill="#2a2a2a"/><rect x="616.9" y="412.2" width="3" height="1.6" fill="#2a2a2a"/><rect x="616.9" y="507.9" width="3" height="1.6" fill="#2a2a2a"/><rect x="616.9" y="603.6" width="3" height="1.6" fill="#2a2a2a"/><rect x="616.9" y="699.3" width="3" height="1.6" fill="#2a2a2a"/><rect x="616.9" y="795.0" width="3" height="1.6" fill="#2a2a2a"/><rect x="712.6" y="412.2" width="3" height="1.6" fill="#2a2a2a"/><rect x="712.6" y="507.9" width="3" height="1.6" fill="#2a2a2a"/><rect x="712.6" y="603.6" width="3" height="1.6" fill="#2a2a2a"/><rect x="712.6" y="699.3" width="3" height="1.6" fill="#2a2a2a"/><rect x="712.6" y="795.0" width="3" height="1.6" fill="#2a2a2a"/><rect x="808.3" y="412.2" width="3" height="1.6" fill="#2a2a2a"/><rect x="808.3" y="507.9" width="3" height="1.6" fill="#2a2a2a"/><rect x="808.3" y="603.6" width="3" height="1.6" fill="#2a2a2a"/><rect x="808.3" y="699.3" width="3" height="1.6" fill="#2a2a2a"/><rect x="808.3" y="795.0" width="3" height="1.6" fill="#2a2a2a"/><rect x="904.0" y="412.2" width="3" height="1.6" fill="#2a2a2a"/><rect x="904.0" y="507.9" width="3" height="1.6" fill="#2a2a2a"/><rect x="904.0" y="603.6" width="3" height="1.6" fill="#2a2a2a"/><rect x="904.0" y="699.3" width="3" height="1.6" fill="#2a2a2a"/><rect x="904.0" y="795.0" width="3" height="1.6" fill="#2a2a2a"/></svg>
<div class="abs" style="left:-4px;top:341.5px;width:18.5px;height:19px;background:#2a2a2a;border-radius:4px;box-shadow:inset 0 0 0 1px #3a3a3a"></div>
<svg class="abs" style="left:4px;top:348px" width="8" height="6"><polyline points="1,1 4,4 7,1" fill="none" stroke="#cfcfcf" stroke-width="1.2"/></svg>
<div class="t" style="left:27.5px;top:341.3px;color:#e4e4e4;font-size:16.6px;">View</div>
<div class="t" style="left:79.5px;top:341.3px;color:#e4e4e4;font-size:16.6px;">Select</div>
<div class="t" style="left:140.7px;top:341.3px;color:#e4e4e4;font-size:16.6px;">Add</div>
<div class="t" style="left:186.5px;top:341.3px;color:#e4e4e4;font-size:16.6px;">Node</div>
<svg class="abs" style="left:0;top:0" width="981" height="420"><polyline points="18,381.5 22.5,386 18,390.5" fill="none" stroke="#cfcfcf" stroke-width="1.2"/><circle cx="34.6" cy="380.6" r="1.6" fill="#9a9a9a"/><circle cx="39.1" cy="381.6" r="2" fill="#a8a8a8"/><circle cx="36.6" cy="386.2" r="2.3" fill="#cfcfcf"/><circle cx="43.3" cy="389.2" r="3.6" fill="#ececec"/><polyline points="196,381.5 200.5,386 196,390.5" fill="none" stroke="#cfcfcf" stroke-width="1.2"/><g transform="translate(211,379.5) scale(1.0)"><rect x="2" y="0.5" width="8" height="5.5" rx="1.8" fill="#e6e6e6"/><rect x="0" y="7.5" width="8" height="5.5" rx="1.8" fill="#e6e6e6"/><rect x="3.2" y="2.6" width="5.6" height="1.2" fill="#333"/><rect x="1.2" y="9.8" width="5.6" height="1.2" fill="#333"/><path d="M10.5,1.5 Q12.5,2 12.5,5 V9 Q12.5,10.5 9,10.5" fill="none" stroke="#e6e6e6" stroke-width="1"/></g><text x="221" y="394" font-family="Liberation Sans" font-size="12" fill="#e6e6e6">2</text><g fill="none" stroke="#e6e6e6" stroke-width="1.25" stroke-linecap="square"><g transform="translate(233,379) scale(1.0)"><path d="M12.6,1.4 L3.6,3.0"/><path d="M2.6,5.9 L13.4,5.9"/><path d="M1.2,9.4 L14.8,9.4"/><path d="M8,3.0 L8,14.6 Q8,15.2 6.2,14.2"/></g><g transform="translate(249,379) scale(1.0)"><path d="M5.2,0.8 Q3.8,5 0.8,8.2"/><path d="M3.4,5.2 L3.4,15.4"/><path d="M8.4,0.8 Q7.6,4 5.8,6.2"/><path d="M7.6,3.6 L15.2,3.6"/><path d="M9.6,3.6 L9.6,15.4"/><path d="M9.6,7.6 L14.6,7.6"/><path d="M9.6,11.3 L14.8,11.3"/></g><g transform="translate(265,379) scale(1.0)"><path d="M4.2,2.2 Q3.6,6 4.4,9.8 Q4.8,10.6 5.6,9.2"/><path d="M10.6,1.6 Q11.8,4.5 11.6,8 Q11,12.5 6.6,15.2"/></g><g transform="translate(281,379) scale(1.0)"><path d="M2.8,0.8 L3.8,2.4"/><path d="M0.9,4.8 L5.6,4.8 Q4,8 0.8,10.4"/><path d="M3.6,7.6 L3.6,15.4"/><path d="M3.8,9.2 L5.8,11"/><path d="M6.6,3.8 L15.3,3.8"/><path d="M12.6,0.9 L13.6,2.3"/><path d="M7.6,6.2 L7.6,15.4"/><path d="M7.6,6.2 L14.3,6.2 L14.3,14.4 Q14.3,15.2 12.8,14.6"/><path d="M7.6,9.4 L14.3,9.4"/><path d="M7.6,12.4 L14.3,12.4"/><path d="M10.9,1.2 L10.9,15.4"/></g><g transform="translate(297,379) scale(1.0)"><path d="M1.8,1.4 L1.8,15.5"/><path d="M1.8,1.4 L6.6,1.4 L6.6,6.6 L1.8,6.6"/><path d="M1.8,4 L6.6,4"/><path d="M9.4,1.4 L14.2,1.4 L14.2,14.6 Q14.2,15.4 12.6,14.8"/><path d="M9.4,1.4 L9.4,6.6 L14.2,6.6"/><path d="M9.4,4 L14.2,4"/><path d="M5,8.6 L11,8.6 L11,14.2 L5,14.2 Z"/><path d="M5,11.4 L11,11.4"/></g></g></svg>
<div class="t" style="left:56.5px;top:375.5px;color:#e4e4e4;font-size:16.7px;">GeometryNodes</div>
<div class="abs" style="left:535.5px;top:341.5px;width:210px;height:19px;background:#282828;border-radius:4px;box-shadow:inset 0 0 0 1px #363636"></div>
<div class="abs" style="left:567px;top:342.5px;width:94px;height:17px;background:#1b1b1b"></div>
<div class="abs" style="left:661px;top:341.5px;width:84.5px;height:19px;background:#474747;border-radius:0 4px 4px 0"></div>
<div class="abs" style="left:685.5px;top:341.5px;width:1px;height:19px;background:#3a3a3a"></div>
<div class="abs" style="left:705.8px;top:341.5px;width:1px;height:19px;background:#3a3a3a"></div>
<div class="abs" style="left:726px;top:341.5px;width:1px;height:19px;background:#3a3a3a"></div>
<svg class="abs" style="left:0;top:0" width="981" height="370"><g transform="translate(540,344.5) scale(1.0)"><rect x="2" y="0.5" width="8" height="5.5" rx="1.8" fill="#e6e6e6"/><rect x="0" y="7.5" width="8" height="5.5" rx="1.8" fill="#e6e6e6"/><rect x="3.2" y="2.6" width="5.6" height="1.2" fill="#333"/><rect x="1.2" y="9.8" width="5.6" height="1.2" fill="#333"/><path d="M10.5,1.5 Q12.5,2 12.5,5 V9 Q12.5,10.5 9,10.5" fill="none" stroke="#e6e6e6" stroke-width="1"/></g><polyline points="556,349.5 559,352.5 562,349.5" fill="none" stroke="#cfcfcf" stroke-width="1.1"/><g fill="none" stroke="#e6e6e6" stroke-width="1.25" stroke-linecap="square"><g transform="translate(573,343.5) scale(1.0)"><path d="M12.6,1.4 L3.6,3.0"/><path d="M2.6,5.9 L13.4,5.9"/><path d="M1.2,9.4 L14.8,9.4"/><path d="M8,3.0 L8,14.6 Q8,15.2 6.2,14.2"/></g><g transform="translate(589,343.5) scale(1.0)"><path d="M5.2,0.8 Q3.8,5 0.8,8.2"/><path d="M3.4,5.2 L3.4,15.4"/><path d="M8.4,0.8 Q7.6,4 5.8,6.2"/><path d="M7.6,3.6 L15.2,3.6"/><path d="M9.6,3.6 L9.6,15.4"/><path d="M9.6,7.6 L14.6,7.6"/><path d="M9.6,11.3 L14.8,11.3"/></g><g transform="translate(605,343.5) scale(1.0)"><path d="M4.2,2.2 Q3.6,6 4.4,9.8 Q4.8,10.6 5.6,9.2"/><path d="M10.6,1.6 Q11.8,4.5 11.6,8 Q11,12.5 6.6,15.2"/></g><g transform="translate(621,343.5) scale(1.0)"><path d="M2.8,0.8 L3.8,2.4"/><path d="M0.9,4.8 L5.6,4.8 Q4,8 0.8,10.4"/><path d="M3.6,7.6 L3.6,15.4"/><path d="M3.8,9.2 L5.8,11"/><path d="M6.6,3.8 L15.3,3.8"/><path d="M12.6,0.9 L13.6,2.3"/><path d="M7.6,6.2 L7.6,15.4"/><path d="M7.6,6.2 L14.3,6.2 L14.3,14.4 Q14.3,15.2 12.8,14.6"/><path d="M7.6,9.4 L14.3,9.4"/><path d="M7.6,12.4 L14.3,12.4"/><path d="M10.9,1.2 L10.9,15.4"/></g><g transform="translate(637,343.5) scale(1.0)"><path d="M1.8,1.4 L1.8,15.5"/><path d="M1.8,1.4 L6.6,1.4 L6.6,6.6 L1.8,6.6"/><path d="M1.8,4 L6.6,4"/><path d="M9.4,1.4 L14.2,1.4 L14.2,14.6 Q14.2,15.4 12.6,14.8"/><path d="M9.4,1.4 L9.4,6.6 L14.2,6.6"/><path d="M9.4,4 L14.2,4"/><path d="M5,8.6 L11,8.6 L11,14.2 L5,14.2 Z"/><path d="M5,11.4 L11,11.4"/></g></g><text x="668" y="357" font-family="Liberation Sans" font-size="16.5" fill="#e6e6e6">2</text><path d="M695.5,345 L690.5,347 V351.5 Q691,355.5 695.5,357.5 Q700,355.5 700.5,351.5 V347 Z" fill="none" stroke="#d0d0d0" stroke-width="1.1"/><path d="M713,344.5 H718 L720.5,347 V353.5 H713 Z M710.5,347.5 V356.5 H717.5" fill="none" stroke="#d0d0d0" stroke-width="1.1"/><path d="M731.5,346 L740,354.5 M740,346 L731.5,354.5" stroke="#d8d8d8" stroke-width="1.2"/><path d="M757,356 L761,352 M759,348.5 L764.5,354 M761.5,351 L765.5,345.5 L767.5,347.5 L762.5,351.5 Z" fill="none" stroke="#cfcfcf" stroke-width="1.1"/></svg>
<svg class="abs" style="left:0;top:0" width="981" height="886"><path d="M361,485.4 C511,485.4 626,489.3 776,489.3" fill="none" stroke="#121212" stroke-opacity="0.8" stroke-width="3.4"/><path d="M361,485.4 C511,485.4 626,489.3 776,489.3" fill="none" stroke="#3ecfa8" stroke-width="2.4"/><path d="M361,485.4 C511,485.4 626,489.3 776,489.3" fill="none" stroke="#c2f1e1" stroke-width="1.5"/><path d="M361,485.4 C466,485.4 481.70000000000005,647.7 586.7,647.7" fill="none" stroke="#121212" stroke-opacity="0.8" stroke-width="3.4"/><path d="M361,485.4 C466,485.4 481.70000000000005,647.7 586.7,647.7" fill="none" stroke="#3ecfa8" stroke-width="2.1"/><path d="M147.7,613.7 C149.7,613.7 158.8,593.3 160.8,593.3" fill="none" stroke="#121212" stroke-opacity="0.8" stroke-width="3.4"/><path d="M147.7,613.7 C149.7,613.7 158.8,593.3 160.8,593.3" fill="none" stroke="#3ecfa8" stroke-width="2.1"/><path d="M147.7,634.6 C161.7,634.6 156.7,826.3 170.7,826.3" fill="none" stroke="#121212" stroke-opacity="0.8" stroke-width="3.4"/><path d="M147.7,634.6 C161.7,634.6 156.7,826.3 170.7,826.3" fill="none" stroke="#e89a5c" stroke-width="2.1"/><path d="M305.2,779.1 C316.44,779.1 322.06,780 333.3,780" fill="none" stroke="#121212" stroke-opacity="0.8" stroke-width="3.4"/><path d="M305.2,779.1 C316.44,779.1 322.06,780 333.3,780" fill="none" stroke="#3ecfa8" stroke-width="2.1"/><path d="M557,690.3 C569,690.3 574.7,710.1 586.7,710.1" fill="none" stroke="#121212" stroke-opacity="0.8" stroke-width="3.4"/><path d="M557,690.3 C569,690.3 574.7,710.1 586.7,710.1" fill="none" stroke="#3ecfa8" stroke-width="2.1"/><path d="M775,581.1 C775,581.1 776,485 776,485" fill="none" stroke="#121212" stroke-opacity="0.8" stroke-width="3.4"/><path d="M775,581.1 C775,581.1 776,485 776,485" fill="none" stroke="#3ecfa8" stroke-width="2.4"/><path d="M775,581.1 C775,581.1 776,485 776,485" fill="none" stroke="#c2f1e1" stroke-width="1.5"/><path d="M911.4,487.4 C914.4,487.4 928.2,467.8 931.2,467.8" fill="none" stroke="#121212" stroke-opacity="0.8" stroke-width="3.4"/><path d="M911.4,487.4 C914.4,487.4 928.2,467.8 931.2,467.8" fill="none" stroke="#3ecfa8" stroke-width="2.4"/><path d="M911.4,487.4 C914.4,487.4 928.2,467.8 931.2,467.8" fill="none" stroke="#c2f1e1" stroke-width="1.5"/></svg>
<div class="node" style="left:160.8px;top:430.6px;width:199.5px;height:176.7px;"><div class="hdr" style="height:19.9px;background:#1d6c58"></div></div>
<svg class="abs" style="left:171.0px;top:436.2px" width="10" height="7"><polyline points="1,1.2 5,5.2 9,1.2" fill="none" stroke="#d9f2e9" stroke-width="1.15"/></svg>
<div class="t" style="left:186.0px;top:430.2px;color:#d9f2e9;font-size:16.2px;">Separate Components</div>
<div class="t" style="right:632.4px;top:453.5px;color:#e4e4e4;font-size:16.2px;">Mesh</div>
<div class="t" style="right:632.4px;top:474.6px;color:#e4e4e4;font-size:16.2px;">Curve</div>
<div class="t" style="right:632.4px;top:495.7px;color:#e4e4e4;font-size:16.2px;">Grease Pencil</div>
<div class="t" style="right:632.4px;top:516.8px;color:#e4e4e4;font-size:16.2px;">Point Cloud</div>
<div class="t" style="right:632.4px;top:537.9px;color:#e4e4e4;font-size:16.2px;">Volume</div>
<div class="t" style="right:632.4px;top:559.0px;color:#e4e4e4;font-size:16.2px;">Instances</div>
<div class="t" style="left:172.6px;top:582.8px;color:#e4e4e4;font-size:16.2px;">Geometry</div>
<div class="node" style="left:13.2px;top:580.1px;width:134.5px;height:90.5px;"><div class="hdr" style="height:19.6px;background:#202020"></div></div>
<svg class="abs" style="left:23.4px;top:585.6px" width="10" height="7"><polyline points="1,1.2 5,5.2 9,1.2" fill="none" stroke="#e4e4e4" stroke-width="1.15"/></svg>
<div class="t" style="left:38.5px;top:579.5px;color:#e4e4e4;font-size:16.2px;">Group Input</div>
<div class="t" style="right:845.2px;top:603.2px;color:#e4e4e4;font-size:16.2px;">Geometry</div>
<div class="t" style="right:845.2px;top:624.1px;color:#e4e4e4;font-size:16.2px;">Object</div>
<div class="node" style="left:170.7px;top:661.2px;width:134.5px;height:199.8px;"><div class="hdr" style="height:19.1px;background:#83324b"></div></div>
<svg class="abs" style="left:180.9px;top:666.5px" width="10" height="7"><polyline points="1,1.2 5,5.2 9,1.2" fill="none" stroke="#f0dde5" stroke-width="1.15"/></svg>
<div class="t" style="left:196.5px;top:660.4px;color:#f0dde5;font-size:16.2px;">Object Info</div>
<div class="t" style="right:687.0px;top:684.2px;color:#e4e4e4;font-size:16.2px;">Transform</div>
<div class="t" style="right:687.0px;top:705.3px;color:#e4e4e4;font-size:16.2px;">Location</div>
<div class="t" style="right:687.0px;top:726.4px;color:#e4e4e4;font-size:16.2px;">Rotation</div>
<div class="t" style="right:687.0px;top:747.5px;color:#e4e4e4;font-size:16.2px;">Scale</div>
<div class="t" style="right:687.0px;top:768.6px;color:#e4e4e4;font-size:16.2px;">Geometry</div>
<div class="fld" style="left:181px;top:796px;width:56.5px;height:17.5px;background:#4772b3;border-radius:4px 0 0 4px"></div>
<div class="fld" style="left:237.5px;top:796px;width:57.8px;height:17.5px;background:#545454;border-radius:0 4px 4px 0"></div>
<div class="t" style="left:185.0px;top:794.3px;color:#e4e4e4;font-size:16.2px;">Origi...</div>
<div class="t" style="left:241.5px;top:794.3px;color:#e4e4e4;font-size:16.2px;">Relat...</div>
<div class="t" style="left:181.5px;top:815.8px;color:#e4e4e4;font-size:16.2px;">Object</div>
<div class="fld" style="left:180.5px;top:841px;width:12.5px;height:12.5px;background:#545454;border-radius:3px"></div>
<div class="t" style="left:197.5px;top:836.9px;color:#e4e4e4;font-size:16.2px;">As Instance</div>
<div class="node" style="left:333.3px;top:657.1px;width:223.7px;height:199.9px;"><div class="hdr" style="height:19.1px;background:#1d6c58"></div></div>
<svg class="abs" style="left:343.5px;top:662.4px" width="10" height="7"><polyline points="1,1.2 5,5.2 9,1.2" fill="none" stroke="#d9f2e9" stroke-width="1.15"/></svg>
<div class="t" style="left:358.0px;top:656.3px;color:#d9f2e9;font-size:16.2px;">Distribute Points on Faces</div>
<div class="t" style="right:435.5px;top:679.8px;color:#e4e4e4;font-size:16.2px;">Points</div>
<div class="t" style="right:435.5px;top:701.2px;color:#e4e4e4;font-size:16.2px;">Normal</div>
<div class="t" style="right:435.5px;top:722.3px;color:#e4e4e4;font-size:16.2px;">Rotation</div>
<div class="fld" style="left:344.2px;top:749.4px;width:201.8px;height:17.8px;background:#292929;box-shadow:inset 0 0 0 1px #3a3a3a"></div>
<div class="t" style="left:351.0px;top:747.8px;color:#e4e4e4;font-size:16.2px;">Random</div>
<svg class="abs" style="left:535px;top:755.5px" width="9" height="6"><polyline points="1,1 4.5,4.5 8,1" fill="none" stroke="#cfcfcf" stroke-width="1.2"/></svg>
<div class="t" style="left:344.7px;top:769.5px;color:#e4e4e4;font-size:16.2px;">Mesh</div>
<div class="t" style="left:344.7px;top:790.4px;color:#e4e4e4;font-size:16.2px;">Selection</div>
<div class="fld" style="left:344.2px;top:813.6px;width:201.8px;height:17.8px;background:#4f4f4f"></div>
<div class="t" style="left:359.5px;top:812.0px;color:#e4e4e4;font-size:16.2px;">Density</div>
<div class="t" style="right:448.5px;top:812.0px;color:#e4e4e4;font-size:16.2px;letter-spacing:0.5px;">10.000</div>
<div class="fld" style="left:344.2px;top:834.8px;width:201.8px;height:17.8px;background:#4f4f4f"></div>
<div class="t" style="left:359.5px;top:833.2px;color:#e4e4e4;font-size:16.2px;">Seed</div>
<div class="t" style="right:448.5px;top:833.2px;color:#e4e4e4;font-size:16.2px;letter-spacing:0.5px;">0</div>
<div class="node" style="left:586.7px;top:548.2px;width:187.8px;height:239.7px;"><div class="hdr" style="height:18.8px;background:#1d6c58"></div></div>
<svg class="abs" style="left:596.9px;top:553.3px" width="10" height="7"><polyline points="1,1.2 5,5.2 9,1.2" fill="none" stroke="#d9f2e9" stroke-width="1.15"/></svg>
<div class="t" style="left:611.0px;top:547.2px;color:#d9f2e9;font-size:16.2px;">Interpolate Curves</div>
<div class="t" style="right:218.0px;top:570.6px;color:#e4e4e4;font-size:16.2px;">Curves</div>
<div class="t" style="right:218.0px;top:591.7px;color:#e4e4e4;font-size:16.2px;">Closest Index</div>
<div class="t" style="right:218.0px;top:613.1px;color:#e4e4e4;font-size:16.2px;">Closest Weight</div>
<div class="t" style="left:597.5px;top:637.2px;color:#e4e4e4;font-size:16.2px;">Guide Curves</div>
<div class="t" style="left:597.5px;top:658.1px;color:#e4e4e4;font-size:16.2px;">Guide Up</div>
<div class="t" style="left:597.5px;top:679.0px;color:#e4e4e4;font-size:16.2px;">Guide Group ID</div>
<div class="t" style="left:597.5px;top:699.9px;color:#e4e4e4;font-size:16.2px;">Points</div>
<div class="t" style="left:597.5px;top:720.8px;color:#e4e4e4;font-size:16.2px;">Point Up</div>
<div class="t" style="left:597.5px;top:741.7px;color:#e4e4e4;font-size:16.2px;">Point Group ID</div>
<div class="fld" style="left:597px;top:765.9px;width:166.6px;height:17.0px;background:#4f4f4f"></div>
<div class="t" style="left:612.0px;top:763.9px;color:#e4e4e4;font-size:16.2px;">Max Neighbors</div>
<div class="t" style="right:231.5px;top:763.9px;color:#e4e4e4;font-size:16.2px;letter-spacing:0.5px;">4</div>
<div class="node" style="left:775.8px;top:453.7px;width:135.6px;height:47.9px;"><div class="hdr" style="height:20.3px;background:#1d6c58"></div><div class="abs" style="left:0;top:0;right:0;bottom:0;box-shadow:inset 0 0 0 1.7px #d6e6e0;border-radius:5px"></div></div>
<svg class="abs" style="left:786.0px;top:459.6px" width="10" height="7"><polyline points="1,1.2 5,5.2 9,1.2" fill="none" stroke="#d9f2e9" stroke-width="1.15"/></svg>
<div class="t" style="left:801.7px;top:453.5px;color:#d9f2e9;font-size:16.2px;">Join Geome...</div>
<div class="t" style="left:787.5px;top:476.9px;color:#e4e4e4;font-size:16.2px;">Geometry</div>
<div class="node" style="left:931.2px;top:434.5px;width:78.8px;height:68.7px;"><div class="hdr" style="height:20.3px;background:#202020"></div></div>
<svg class="abs" style="left:941.4px;top:440.3px" width="10" height="7"><polyline points="1,1.2 5,5.2 9,1.2" fill="none" stroke="#e4e4e4" stroke-width="1.15"/></svg>
<div class="t" style="left:955.5px;top:434.2px;color:#e4e4e4;font-size:16.2px;">Group Output</div>
<div class="t" style="left:942.0px;top:457.3px;color:#e4e4e4;font-size:16.2px;">Geometry</div>
<svg class="abs" style="left:0;top:0" width="981" height="886"><circle cx="361" cy="464.0" r="4.2" fill="#00d6a3" stroke="#151515" stroke-width="0.9"/><circle cx="361" cy="485.1" r="4.2" fill="#00d6a3" stroke="#151515" stroke-width="0.9"/><circle cx="361" cy="506.2" r="4.2" fill="#00d6a3" stroke="#151515" stroke-width="0.9"/><circle cx="361" cy="527.3" r="4.2" fill="#00d6a3" stroke="#151515" stroke-width="0.9"/><circle cx="361" cy="548.4" r="4.2" fill="#00d6a3" stroke="#151515" stroke-width="0.9"/><circle cx="361" cy="569.5" r="4.2" fill="#00d6a3" stroke="#151515" stroke-width="0.9"/><circle cx="160.8" cy="593.3" r="4.2" fill="#00d6a3" stroke="#151515" stroke-width="0.9"/><circle cx="147.7" cy="613.7" r="4.2" fill="#00d6a3" stroke="#151515" stroke-width="0.9"/><circle cx="147.7" cy="634.6" r="4.2" fill="#ed9e5c" stroke="#151515" stroke-width="0.9"/><circle cx="147.7" cy="655.9" r="3.8" fill="none" stroke="#6e6e6e" stroke-width="1.2"/><circle cx="305.2" cy="694.7" r="4.2" fill="#cf4f93" stroke="#151515" stroke-width="0.9"/><circle cx="305.2" cy="715.8" r="4.2" fill="#6363c7" stroke="#151515" stroke-width="0.9"/><circle cx="305.2" cy="736.9" r="4.2" fill="#a663c7" stroke="#151515" stroke-width="0.9"/><circle cx="305.2" cy="757.8" r="4.2" fill="#6363c7" stroke="#151515" stroke-width="0.9"/><circle cx="305.2" cy="779.1" r="4.2" fill="#00d6a3" stroke="#151515" stroke-width="0.9"/><circle cx="170.7" cy="826.3" r="4.2" fill="#ed9e5c" stroke="#151515" stroke-width="0.9"/><circle cx="170.7" cy="847.4" r="4.2" fill="#cca6d6" stroke="#151515" stroke-width="0.9"/><circle cx="557" cy="690.3" r="4.2" fill="#00d6a3" stroke="#151515" stroke-width="0.9"/><path d="M557,706.7 L562,711.7 L557,716.7 L552,711.7 Z" fill="#6363c7" stroke="#151515" stroke-width="0.9"/><path d="M557,727.8 L562,732.8 L557,737.8 L552,732.8 Z" fill="#a663c7" stroke="#151515" stroke-width="0.9"/><circle cx="333.3" cy="780" r="4.2" fill="#00d6a3" stroke="#151515" stroke-width="0.9"/><path d="M333.3,795.9 L338.3,800.9 L333.3,805.9 L328.3,800.9 Z" fill="#cca6d6" stroke="#151515" stroke-width="0.9"/><path d="M333.3,799.4 L334.8,800.9 L333.3,802.4 L331.8,800.9 Z" fill="#1e1e1e"/><path d="M333.3,817 L338.3,822 L333.3,827 L328.3,822 Z" fill="#a1a1a1" stroke="#151515" stroke-width="0.9"/><path d="M333.3,820.5 L334.8,822 L333.3,823.5 L331.8,822 Z" fill="#1e1e1e"/><circle cx="333.3" cy="843" r="4.2" fill="#598c5c" stroke="#151515" stroke-width="0.9"/><circle cx="774.5" cy="581.1" r="4.2" fill="#00d6a3" stroke="#151515" stroke-width="0.9"/><path d="M774.5,597.2 L779.5,602.2 L774.5,607.2 L769.5,602.2 Z" fill="#598c5c" stroke="#151515" stroke-width="0.9"/><path d="M774.5,618.6 L779.5,623.6 L774.5,628.6 L769.5,623.6 Z" fill="#a1a1a1" stroke="#151515" stroke-width="0.9"/><circle cx="586.7" cy="647.7" r="4.2" fill="#00d6a3" stroke="#151515" stroke-width="0.9"/><path d="M586.7,663.5 L591.7,668.5 L586.7,673.5 L581.7,668.5 Z" fill="#6363c7" stroke="#151515" stroke-width="0.9"/><path d="M586.7,667.0 L588.2,668.5 L586.7,670.0 L585.2,668.5 Z" fill="#1e1e1e"/><path d="M586.7,684.6 L591.7,689.6 L586.7,694.6 L581.7,689.6 Z" fill="#598c5c" stroke="#151515" stroke-width="0.9"/><path d="M586.7,688.1 L588.2,689.6 L586.7,691.1 L585.2,689.6 Z" fill="#1e1e1e"/><circle cx="586.7" cy="710.1" r="4.2" fill="#00d6a3" stroke="#151515" stroke-width="0.9"/><path d="M586.7,726.2 L591.7,731.2 L586.7,736.2 L581.7,731.2 Z" fill="#6363c7" stroke="#151515" stroke-width="0.9"/><path d="M586.7,729.7 L588.2,731.2 L586.7,732.7 L585.2,731.2 Z" fill="#1e1e1e"/><path d="M586.7,747.1 L591.7,752.1 L586.7,757.1 L581.7,752.1 Z" fill="#598c5c" stroke="#151515" stroke-width="0.9"/><path d="M586.7,750.6 L588.2,752.1 L586.7,753.6 L585.2,752.1 Z" fill="#1e1e1e"/><circle cx="586.7" cy="773.8" r="4.2" fill="#598c5c" stroke="#151515" stroke-width="0.9"/><rect x="772.8" y="478.4" width="7.6" height="17.4" rx="3.8" fill="#00d6a3" stroke="#151515" stroke-width="0.9"/><circle cx="911.4" cy="487.4" r="4.2" fill="#00d6a3" stroke="#151515" stroke-width="0.9"/><circle cx="931.2" cy="467.8" r="4.2" fill="#00d6a3" stroke="#151515" stroke-width="0.9"/><circle cx="931.2" cy="489" r="3.8" fill="none" stroke="#6e6e6e" stroke-width="1.2"/></svg>
</body></html>
